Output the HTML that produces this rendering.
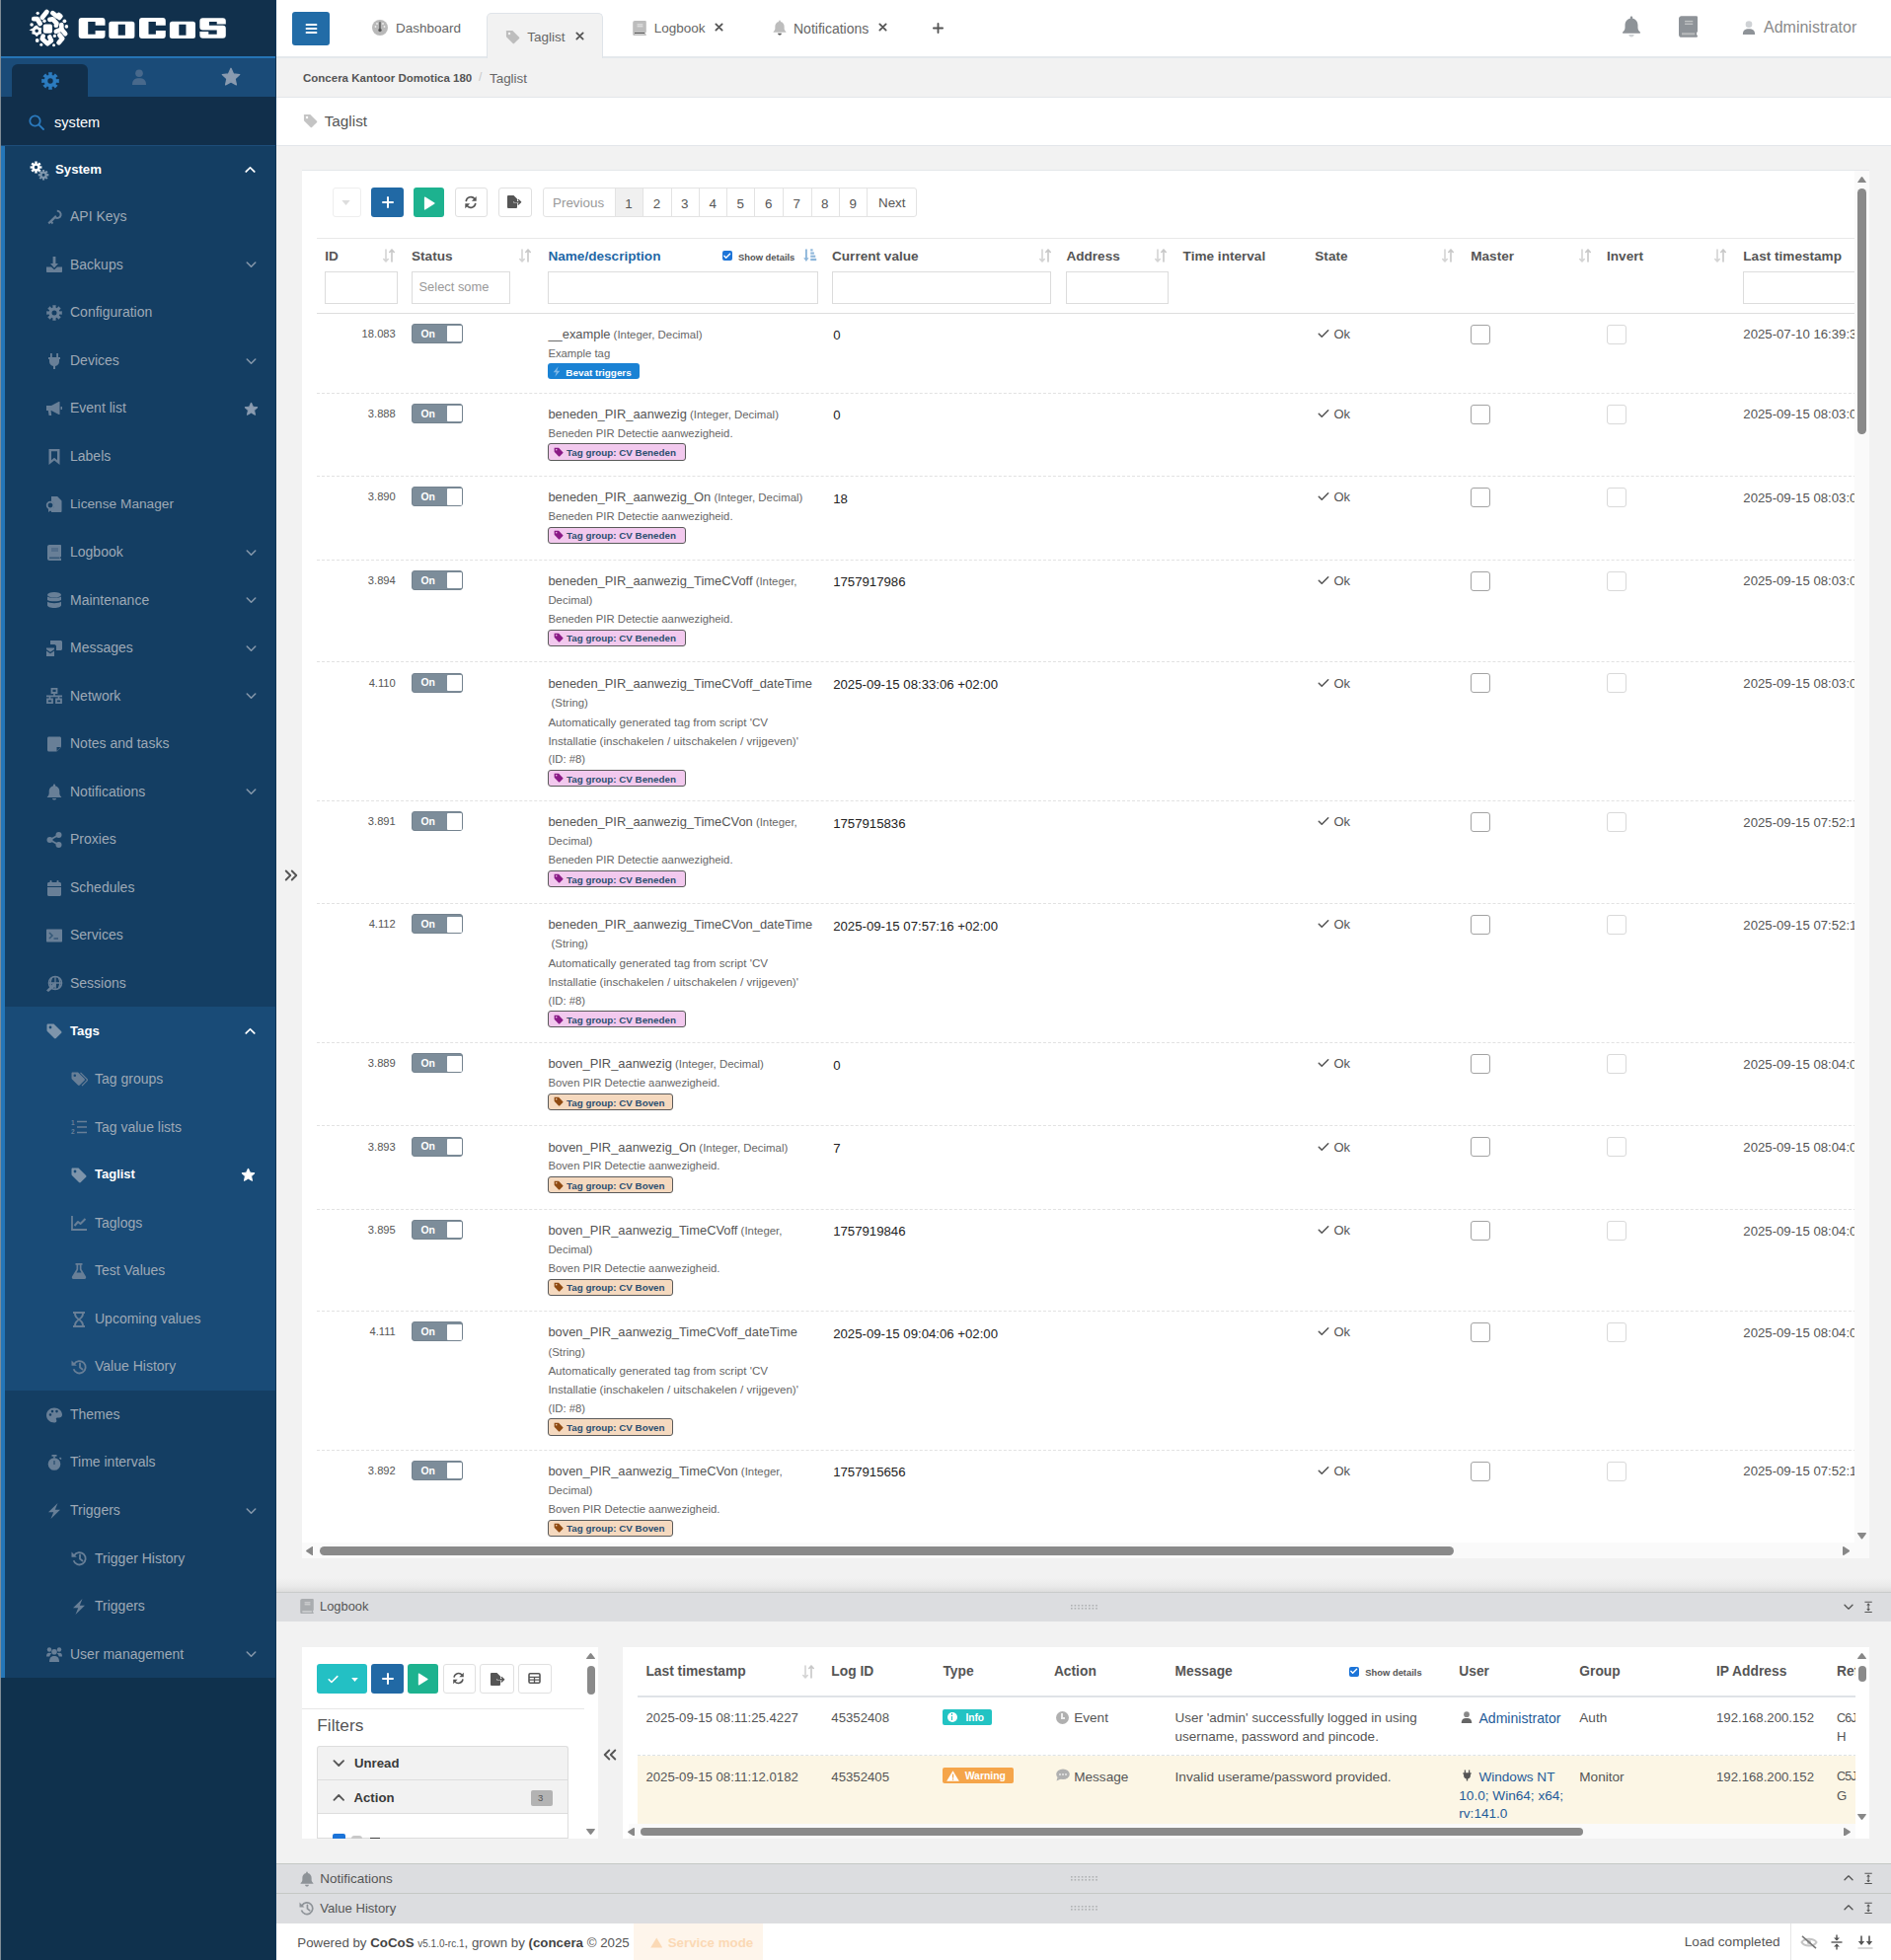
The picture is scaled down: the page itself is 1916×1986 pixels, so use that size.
<!DOCTYPE html><html><head><meta charset="utf-8"><style>
*{box-sizing:border-box;margin:0;padding:0}
html,body{width:1916px;height:1986px;overflow:hidden}
body{position:relative;background:#f2f2f2;font-family:"Liberation Sans",sans-serif;color:#555}
.a{position:absolute}
svg{display:block}
</style></head><body><div class="a" style="left:0px;top:0px;width:280px;height:1986px;background:#0f314d"></div>
<div class="a" style="left:0px;top:0px;width:280px;height:57px;background:#11304c"></div>
<svg class="a" style="left:26px;top:6px" width="46" height="44" viewBox="0 0 46 44"><rect x="17.8" y="18.5" width="9.2" height="9.2" rx="2" fill="#fff"/><circle cx="12.2" cy="7.3" r="1.6" fill="#fff"/><circle cx="19" cy="15.3" r="1.7" fill="#fff"/><circle cx="39.4" cy="15.3" r="1.9" fill="#fff"/><circle cx="6.1" cy="19" r="1.8" fill="#fff"/><circle cx="41.4" cy="20.9" r="1.8" fill="#fff"/><circle cx="29.4" cy="30.4" r="1.6" fill="#fff"/><circle cx="11.7" cy="35" r="1.9" fill="#fff"/><circle cx="15.8" cy="39.2" r="1.5" fill="#fff"/><circle cx="28.5" cy="39.7" r="1.5" fill="#fff"/><polyline points="16.8,11.7 21.4,6.1" fill="none" stroke="#fff" stroke-width="4.8" stroke-linecap="round" stroke-linejoin="round"/><polyline points="27.3,7.1 31.5,10.3" fill="none" stroke="#fff" stroke-width="4.6" stroke-linecap="round" stroke-linejoin="round"/><rect x="30.5" y="7.2" width="6.8" height="6.6" rx="2.2" fill="#fff" transform="rotate(40 33.9 10.5)"/><polyline points="8.3,13.2 11.8,13.2 14.6,18" fill="none" stroke="#fff" stroke-width="4.8" stroke-linecap="round" stroke-linejoin="round"/><polyline points="24.5,13.8 27.3,13.3 31.4,17.6 31,19.6" fill="none" stroke="#fff" stroke-width="4.8" stroke-linecap="round" stroke-linejoin="round"/><path fill="#fff" fill-rule="evenodd" d="M11.2,19.6 L13.5,21.7 L16.3,22.4 L15.7,25.5 L16.2,28.3 L13.3,29 L11.2,31.2 L9.1,29 L6.2,28.3 L6.8,25.5 L3.5,24.5 L7.3,22.4 L9,20.5Z M11.2,23.5 A1.8,1.8 0 1 0 11.2,27.1 A1.8,1.8 0 1 0 11.2,23.5Z"/><polyline points="36.3,19 36.3,23.6 30.8,25.8" fill="none" stroke="#fff" stroke-width="4.6" stroke-linecap="round" stroke-linejoin="round"/><polyline points="36.3,23.6 40.2,28.2" fill="none" stroke="#fff" stroke-width="4.6" stroke-linecap="round" stroke-linejoin="round"/><polyline points="17.7,30.6 16.7,33.4 22.2,38.3 26,35.2 24.3,31.5" fill="none" stroke="#fff" stroke-width="4.6" stroke-linecap="round" stroke-linejoin="round"/><polyline points="34.4,29.6 37.2,33 33.6,37.2" fill="none" stroke="#fff" stroke-width="4.8" stroke-linecap="round" stroke-linejoin="round"/></svg>
<svg class="a" style="left:0px;top:0px" width="240" height="57" viewBox="0 0 240 57"><path fill="#fff" fill-rule="evenodd" d="M82.7,18.06 L103.5,18.06 Q106.5,18.06 106.5,21 L106.5,25.8 L96.6,25.8 L96.6,30.9 L106.5,30.9 L106.5,36 Q106.5,39 103.5,39 L82.7,39 Q79.7,39 79.7,36 L79.7,21 Q79.7,18.06 82.7,18.06Z M89.2,22.1 L89.2,34.8 L96.6,34.8 L96.6,22.1Z"/><path fill="#fff" fill-rule="evenodd" d="M112.8,21.8 L133.9,21.8 Q136.4,21.8 136.4,24.3 L136.4,36.5 Q136.4,39 133.9,39 L112.8,39 Q110.3,39 110.3,36.5 L110.3,24.3 Q110.3,21.8 112.8,21.8Z M119.7,24.8 L119.7,35.7 L126.9,35.7 L126.9,24.8Z"/><path fill="#fff" fill-rule="evenodd" d="M144,18.06 L164.8,18.06 Q167.8,18.06 167.8,21 L167.8,25.8 L157.9,25.8 L157.9,30.9 L167.8,30.9 L167.8,36 Q167.8,39 164.8,39 L144,39 Q141,39 141,36 L141,21 Q141,18.06 144,18.06Z M150.5,22.1 L150.5,34.8 L157.9,34.8 L157.9,22.1Z"/><path fill="#fff" fill-rule="evenodd" d="M174.4,21.8 L195.5,21.8 Q198.0,21.8 198.0,24.3 L198.0,36.5 Q198.0,39 195.5,39 L174.4,39 Q171.9,39 171.9,36.5 L171.9,24.3 Q171.9,21.8 174.4,21.8Z M181.3,24.8 L181.3,35.7 L188.5,35.7 L188.5,24.8Z"/><path fill="#fff" d="M205.4,18.2 L225.8,18.2 Q228.8,18.2 228.8,21.2 L228.8,24.5 L219.70000000000002,24.5 L219.70000000000002,22 L211.9,22 L211.9,25.8 L225.8,25.8 Q228.8,25.8 228.8,28.8 L228.8,35.7 Q228.8,38.7 225.8,38.7 L205.4,38.7 Q202.4,38.7 202.4,35.7 L202.4,31.9 L211.3,31.9 L211.3,34.75 L219.70000000000002,34.75 L219.70000000000002,30.6 L205.4,30.6 Q202.4,30.6 202.4,27.6 L202.4,21.2 Q202.4,18.2 205.4,18.2Z"/></svg>
<div class="a" style="left:0px;top:57px;width:280px;height:2px;background:#2574b5"></div>
<div class="a" style="left:0px;top:59px;width:280px;height:39px;background:#1a4b78"></div>
<div class="a" style="left:12px;top:65px;width:77px;height:33px;background:#112f4b;border-radius:6px 6px 0 0"></div>
<svg class="a" style="left:42px;top:73px" width="18" height="18" viewBox="0 0 16 16"><path fill="#2b7bbf" fill-rule="evenodd" d="M15.81,6.29 L15.81,9.71 L13.41,9.46 L12.85,10.79 L14.74,12.31 L12.31,14.74 L10.79,12.85 L9.46,13.41 L9.71,15.81 L6.29,15.81 L6.54,13.41 L5.21,12.85 L3.69,14.74 L1.26,12.31 L3.15,10.79 L2.59,9.46 L0.19,9.71 L0.19,6.29 L2.59,6.54 L3.15,5.21 L1.26,3.69 L3.69,1.26 L5.21,3.15 L6.54,2.59 L6.29,0.19 L9.71,0.19 L9.46,2.59 L10.79,3.15 L12.31,1.26 L14.74,3.69 L12.85,5.21 L13.41,6.54ZM10.40,8.00 A2.4,2.4 0 1,0 5.60,8.00 A2.4,2.4 0 1,0 10.40,8.00Z"/></svg>
<svg class="a" style="left:133px;top:69px" width="16" height="18" viewBox="0 0 16 16"><circle cx="8" cy="4.2" r="3.8" fill="#48698c"/><path fill="#48698c" d="M1,16 C1,11 3.5,9.3 8,9.3 C12.5,9.3 15,11 15,16Z"/></svg>
<svg class="a" style="left:224px;top:68px" width="20" height="20" viewBox="0 0 24 24"><path fill="#8a9bb0" stroke="#8a9bb0" stroke-width="1.5" stroke-linejoin="round" d="M12,1.5 L15.1,8.3 L22.5,9.1 L17,14.1 L18.5,21.5 L12,17.8 L5.5,21.5 L7,14.1 L1.5,9.1 L8.9,8.3Z"/></svg>
<div class="a" style="left:0px;top:98px;width:280px;height:49px;background:#112f4b"></div>
<svg class="a" style="left:29px;top:116px" width="16" height="16" viewBox="0 0 16 16"><circle cx="6.5" cy="6.5" r="5.2" fill="none" stroke="#2b7bbf" stroke-width="1.8"/><path d="M10.3,10.3 L15,15" stroke="#2b7bbf" stroke-width="1.8" stroke-linecap="round"/></svg>
<div class="a" style="left:55px;top:116.20px;font-size:14.6px;line-height:16.79px;color:#fff;font-weight:normal;white-space:nowrap">system</div>
<div class="a" style="left:0px;top:147px;width:280px;height:1px;background:#1d4d7a"></div>
<div class="a" style="left:0px;top:148px;width:280px;height:1552px;background:#143e63"></div>
<div class="a" style="left:0px;top:1019.5px;width:280px;height:389.5px;background:#194b77"></div>
<div class="a" style="left:1px;top:148px;width:4px;height:1552px;background:#2576b8"></div>
<div class="a" style="left:279px;top:0px;width:1px;height:1986px;background:#0f3658"></div>
<div class="a" style="left:0px;top:0px;width:1px;height:1986px;background:#7f8c96"></div>
<svg class="a" style="left:30px;top:163px" width="20" height="20" viewBox="0 0 18.5 18.5" overflow="visible"><path fill="#fff" fill-rule="evenodd" d="M11.47,4.80 L11.47,7.20 L9.77,7.01 L9.38,7.95 L10.72,9.02 L9.02,10.72 L7.95,9.38 L7.01,9.77 L7.20,11.47 L4.80,11.47 L4.99,9.77 L4.05,9.38 L2.98,10.72 L1.28,9.02 L2.62,7.95 L2.23,7.01 L0.53,7.20 L0.53,4.80 L2.23,4.99 L2.62,4.05 L1.28,2.98 L2.98,1.28 L4.05,2.62 L4.99,2.23 L4.80,0.53 L7.20,0.53 L7.01,2.23 L7.95,2.62 L9.02,1.28 L10.72,2.98 L9.38,4.05 L9.77,4.99ZM7.60,6.00 A1.6,1.6 0 1,0 4.40,6.00 A1.6,1.6 0 1,0 7.60,6.00Z"/><path fill="#7f97ad" fill-rule="evenodd" d="M17.88,12.13 L17.88,14.27 L16.38,14.11 L16.03,14.95 L17.21,15.90 L15.70,17.41 L14.75,16.23 L13.91,16.58 L14.07,18.08 L11.93,18.08 L12.09,16.58 L11.25,16.23 L10.30,17.41 L8.79,15.90 L9.97,14.95 L9.62,14.11 L8.12,14.27 L8.12,12.13 L9.62,12.29 L9.97,11.45 L8.79,10.50 L10.30,8.99 L11.25,10.17 L12.09,9.82 L11.93,8.32 L14.07,8.32 L13.91,9.82 L14.75,10.17 L15.70,8.99 L17.21,10.50 L16.03,11.45 L16.38,12.29ZM14.40,13.20 A1.4,1.4 0 1,0 11.60,13.20 A1.4,1.4 0 1,0 14.40,13.20Z"/></svg>
<div class="a" style="left:56px;top:163.71px;font-size:13.2px;line-height:15.18px;color:#fff;font-weight:bold;white-space:nowrap">System</div>
<svg class="a" style="left:248px;top:168px" width="11" height="7" viewBox="0 0 12 8"><path d="M1.2,6.8 L6,2 L10.8,6.8" fill="none" stroke="#fff" stroke-width="2" stroke-linecap="round" stroke-linejoin="round"/></svg>
<svg class="a" style="left:47px;top:211.85000000000002px" width="16" height="16" viewBox="0 0 16 16" overflow="visible"><path fill="none" stroke="#687f97" stroke-width="2" d="M10.8,1.8 A3.6,3.6 0 1 1 9.2,8.5"/><path fill="#687f97" d="M9.2,6 L1.5,13.6 L3,15.2 L4.4,13.8 L5.8,15.2 L7.2,13.8 L6,12.5 L10.6,7.8Z"/></svg>
<div class="a" style="left:71px;top:211.10px;font-size:14px;line-height:16.1px;color:#9ea9b6;font-weight:normal;white-space:nowrap">API Keys</div>
<svg class="a" style="left:47px;top:260.4px" width="16" height="16" viewBox="0 0 16 16" overflow="visible"><path fill="#687f97" d="M6.6,0 L9.4,0 L9.4,7 L12,7 L8,11.5 L4,7 L6.6,7Z"/><path fill="#687f97" d="M0,10.5 L5,10.5 L8,13.3 L11,10.5 L16,10.5 L16,15 C16,15.6 15.6,16 15,16 L1,16 C0.4,16 0,15.6 0,15Z"/></svg>
<div class="a" style="left:71px;top:259.65px;font-size:14px;line-height:16.1px;color:#9ea9b6;font-weight:normal;white-space:nowrap">Backups</div>
<svg class="a" style="left:249px;top:265.4px" width="11" height="7" viewBox="0 0 12 8"><path d="M1.2,1.2 L6,6 L10.8,1.2" fill="none" stroke="#8597aa" stroke-width="1.8" stroke-linecap="round" stroke-linejoin="round"/></svg>
<svg class="a" style="left:47px;top:308.95px" width="16" height="16" viewBox="0 0 16 16" overflow="visible"><path fill="#687f97" fill-rule="evenodd" d="M15.81,6.29 L15.81,9.71 L13.41,9.46 L12.85,10.79 L14.74,12.31 L12.31,14.74 L10.79,12.85 L9.46,13.41 L9.71,15.81 L6.29,15.81 L6.54,13.41 L5.21,12.85 L3.69,14.74 L1.26,12.31 L3.15,10.79 L2.59,9.46 L0.19,9.71 L0.19,6.29 L2.59,6.54 L3.15,5.21 L1.26,3.69 L3.69,1.26 L5.21,3.15 L6.54,2.59 L6.29,0.19 L9.71,0.19 L9.46,2.59 L10.79,3.15 L12.31,1.26 L14.74,3.69 L12.85,5.21 L13.41,6.54ZM10.50,8.00 A2.5,2.5 0 1,0 5.50,8.00 A2.5,2.5 0 1,0 10.50,8.00Z"/></svg>
<div class="a" style="left:71px;top:308.20px;font-size:14px;line-height:16.1px;color:#9ea9b6;font-weight:normal;white-space:nowrap">Configuration</div>
<svg class="a" style="left:47px;top:357.5px" width="16" height="16" viewBox="0 0 16 16" overflow="visible"><path fill="#687f97" d="M4,0 L5.8,0 L5.8,4 L10.2,4 L10.2,0 L12,0 L12,4 L14,4 L14,6 L13,6 L13,8.5 C13,11 11,12.8 9,13 L9,16 L7,16 L7,13 C5,12.8 3,11 3,8.5 L3,6 L2,6 L2,4 L4,4Z"/></svg>
<div class="a" style="left:71px;top:356.75px;font-size:14px;line-height:16.1px;color:#9ea9b6;font-weight:normal;white-space:nowrap">Devices</div>
<svg class="a" style="left:249px;top:362.5px" width="11" height="7" viewBox="0 0 12 8"><path d="M1.2,1.2 L6,6 L10.8,1.2" fill="none" stroke="#8597aa" stroke-width="1.8" stroke-linecap="round" stroke-linejoin="round"/></svg>
<svg class="a" style="left:47px;top:406.05px" width="16" height="16" viewBox="0 0 16 16" overflow="visible"><path fill="#687f97" d="M0,5 L5,5 L12.5,1 L13.5,1 L13.5,14 L12.5,14 L5,10 L4.6,10 L5.2,15 L2.6,15 L1.8,10 L0,10Z"/><rect x="14.5" y="6" width="1.5" height="3" fill="#687f97"/></svg>
<div class="a" style="left:71px;top:405.30px;font-size:14px;line-height:16.1px;color:#9ea9b6;font-weight:normal;white-space:nowrap">Event list</div>
<svg class="a" style="left:247px;top:406.55px" width="15" height="15" viewBox="0 0 24 24"><path fill="#8a9bb0" stroke="#8a9bb0" stroke-width="1.5" stroke-linejoin="round" d="M12,1.5 L15.1,8.3 L22.5,9.1 L17,14.1 L18.5,21.5 L12,17.8 L5.5,21.5 L7,14.1 L1.5,9.1 L8.9,8.3Z"/></svg>
<svg class="a" style="left:47px;top:454.59999999999997px" width="16" height="16" viewBox="0 0 16 16" overflow="visible"><path fill="#687f97" d="M2.5,0 L13.5,0 L13.5,16 L8,11.5 L2.5,16Z M5,2.3 L5,11.2 L8,8.8 L11,11.2 L11,2.3Z" fill-rule="evenodd"/></svg>
<div class="a" style="left:71px;top:453.85px;font-size:14px;line-height:16.1px;color:#9ea9b6;font-weight:normal;white-space:nowrap">Labels</div>
<svg class="a" style="left:47px;top:503.15px" width="16" height="16" viewBox="0 0 16 16" overflow="visible"><path fill="#687f97" d="M5,0 L11,0 L15.5,4.5 L15.5,15 C15.5,15.6 15.1,16 14.5,16 L5,16 L5,12.5 C7,12 8,10.5 8,9 C8,7 6.5,5.5 5,5.3Z"/><path fill="#687f97" d="M11,0 L11,4.5 L15.5,4.5Z" opacity="0.5"/><circle cx="4" cy="9" r="3.3" fill="none" stroke="#687f97" stroke-width="1.8"/><path fill="#687f97" d="M2,12 L2,16 L4,14.6 L6,16 L6,12Z"/></svg>
<div class="a" style="left:71px;top:502.57px;font-size:13.7px;line-height:15.75px;color:#9ea9b6;font-weight:normal;white-space:nowrap">License Manager</div>
<svg class="a" style="left:47px;top:551.7px" width="16" height="16" viewBox="0 0 16 16" overflow="visible"><path fill="#687f97" d="M1,2 C1,0.9 1.9,0 3,0 L14,0 C14.6,0 15,0.4 15,1 L15,12 L14.3,12 L14.3,14 L15,14 L15,16 L3,16 C1.9,16 1,15.1 1,14Z"/><rect x="3" y="12.5" width="10.5" height="1.6" fill="#143e63" opacity="0.6"/><rect x="5" y="3.5" width="7" height="1" fill="#143e63" opacity="0.5"/><rect x="5" y="5.5" width="7" height="1" fill="#143e63" opacity="0.5"/></svg>
<div class="a" style="left:71px;top:550.95px;font-size:14px;line-height:16.1px;color:#9ea9b6;font-weight:normal;white-space:nowrap">Logbook</div>
<svg class="a" style="left:249px;top:556.7px" width="11" height="7" viewBox="0 0 12 8"><path d="M1.2,1.2 L6,6 L10.8,1.2" fill="none" stroke="#8597aa" stroke-width="1.8" stroke-linecap="round" stroke-linejoin="round"/></svg>
<svg class="a" style="left:47px;top:600.25px" width="16" height="16" viewBox="0 0 16 16" overflow="visible"><ellipse cx="8" cy="2.8" rx="7" ry="2.8" fill="#687f97"/><path fill="#687f97" d="M1,4.6 C2.5,6.2 13.5,6.2 15,4.6 L15,8 C13.5,9.8 2.5,9.8 1,8Z"/><path fill="#687f97" d="M1,9.8 C2.5,11.6 13.5,11.6 15,9.8 L15,13.2 C15,14.8 12,16 8,16 C4,16 1,14.8 1,13.2Z"/></svg>
<div class="a" style="left:71px;top:599.50px;font-size:14px;line-height:16.1px;color:#9ea9b6;font-weight:normal;white-space:nowrap">Maintenance</div>
<svg class="a" style="left:249px;top:605.25px" width="11" height="7" viewBox="0 0 12 8"><path d="M1.2,1.2 L6,6 L10.8,1.2" fill="none" stroke="#8597aa" stroke-width="1.8" stroke-linecap="round" stroke-linejoin="round"/></svg>
<svg class="a" style="left:47px;top:648.8px" width="16" height="16" viewBox="0 0 16 16" overflow="visible"><path fill="#687f97" d="M4,0 L14.5,0 C15.3,0 16,0.7 16,1.5 L16,8.5 C16,9.3 15.3,10 14.5,10 L10,10 L10,6 C10,5 9.3,4 8,4 L4,4Z"/><path fill="#687f97" d="M0,7.5 L8,7.5 L8,9 L4,11.7 L0,9Z M0,10.6 L4,13.3 L8,10.6 L8,16 L0,16Z"/></svg>
<div class="a" style="left:71px;top:648.05px;font-size:14px;line-height:16.1px;color:#9ea9b6;font-weight:normal;white-space:nowrap">Messages</div>
<svg class="a" style="left:249px;top:653.8px" width="11" height="7" viewBox="0 0 12 8"><path d="M1.2,1.2 L6,6 L10.8,1.2" fill="none" stroke="#8597aa" stroke-width="1.8" stroke-linecap="round" stroke-linejoin="round"/></svg>
<svg class="a" style="left:47px;top:697.3499999999999px" width="16" height="16" viewBox="0 0 16 16" overflow="visible"><path fill="none" stroke="#687f97" stroke-width="1.8" d="M5.5,0.9 L10.5,0.9 L10.5,5 L5.5,5Z M1,11.5 L6,11.5 L6,15.1 L1,15.1Z M10,11.5 L15,11.5 L15,15.1 L10,15.1Z"/><path stroke="#687f97" stroke-width="1.6" d="M8,5 L8,8 M0,8.4 L16,8.4 M3.5,8.4 L3.5,11.5 M12.5,8.4 L12.5,11.5"/></svg>
<div class="a" style="left:71px;top:696.60px;font-size:14px;line-height:16.1px;color:#9ea9b6;font-weight:normal;white-space:nowrap">Network</div>
<svg class="a" style="left:249px;top:702.3499999999999px" width="11" height="7" viewBox="0 0 12 8"><path d="M1.2,1.2 L6,6 L10.8,1.2" fill="none" stroke="#8597aa" stroke-width="1.8" stroke-linecap="round" stroke-linejoin="round"/></svg>
<svg class="a" style="left:47px;top:745.8999999999999px" width="16" height="16" viewBox="0 0 16 16" overflow="visible"><path fill="#687f97" d="M1,2 C1,1.2 1.7,0.5 2.5,0.5 L13.5,0.5 C14.3,0.5 15,1.2 15,2 L15,10.5 L10,15.5 L2.5,15.5 C1.7,15.5 1,14.8 1,14Z M15,11 L10.5,11 L10.5,15.5Z" fill-rule="evenodd"/></svg>
<div class="a" style="left:71px;top:745.15px;font-size:14px;line-height:16.1px;color:#9ea9b6;font-weight:normal;white-space:nowrap">Notes and tasks</div>
<svg class="a" style="left:47px;top:794.45px" width="16" height="16" viewBox="0 0 16 16" overflow="visible"><path fill="#687f97" d="M8,0.5 C8.6,0.5 9,0.9 9,1.5 L9,2.2 C11.6,2.7 13.3,5 13.3,7.6 L13.3,9.8 C13.3,11.3 14,12.6 15.2,13.5 L15.2,14 L0.8,14 L0.8,13.5 C2,12.6 2.7,11.3 2.7,9.8 L2.7,7.6 C2.7,5 4.4,2.7 7,2.2 L7,1.5 C7,0.9 7.4,0.5 8,0.5Z"/><path fill="#687f97" d="M6,15 L10,15 C10,16 9,16.5 8,16.5 C7,16.5 6,16 6,15Z"/></svg>
<div class="a" style="left:71px;top:793.70px;font-size:14px;line-height:16.1px;color:#9ea9b6;font-weight:normal;white-space:nowrap">Notifications</div>
<svg class="a" style="left:249px;top:799.45px" width="11" height="7" viewBox="0 0 12 8"><path d="M1.2,1.2 L6,6 L10.8,1.2" fill="none" stroke="#8597aa" stroke-width="1.8" stroke-linecap="round" stroke-linejoin="round"/></svg>
<svg class="a" style="left:47px;top:843.0px" width="16" height="16" viewBox="0 0 16 16" overflow="visible"><circle cx="12.5" cy="3" r="3" fill="#687f97"/><circle cx="3.5" cy="8" r="3" fill="#687f97"/><circle cx="12.5" cy="13" r="3" fill="#687f97"/><path d="M3.5,8 L12.5,3 M3.5,8 L12.5,13" stroke="#687f97" stroke-width="1.8"/></svg>
<div class="a" style="left:71px;top:842.25px;font-size:14px;line-height:16.1px;color:#9ea9b6;font-weight:normal;white-space:nowrap">Proxies</div>
<svg class="a" style="left:47px;top:891.55px" width="16" height="16" viewBox="0 0 16 16" overflow="visible"><path fill="#687f97" d="M1,3.5 C1,2.7 1.7,2 2.5,2 L13.5,2 C14.3,2 15,2.7 15,3.5 L15,6 L1,6Z M1,7 L15,7 L15,14.5 C15,15.3 14.3,16 13.5,16 L2.5,16 C1.7,16 1,15.3 1,14.5Z"/><rect x="3.5" y="0" width="2" height="3.5" rx="1" fill="#687f97"/><rect x="10.5" y="0" width="2" height="3.5" rx="1" fill="#687f97"/></svg>
<div class="a" style="left:71px;top:890.80px;font-size:14px;line-height:16.1px;color:#9ea9b6;font-weight:normal;white-space:nowrap">Schedules</div>
<svg class="a" style="left:47px;top:940.0999999999999px" width="16" height="16" viewBox="0 0 16 16" overflow="visible"><path fill="#687f97" d="M1,1.5 L15,1.5 C15.6,1.5 16,1.9 16,2.5 L16,13.5 C16,14.1 15.6,14.5 15,14.5 L1,14.5 C0.4,14.5 0,14.1 0,13.5 L0,2.5 C0,1.9 0.4,1.5 1,1.5Z"/><path d="M3,5 L6,8 L3,11 M7.5,11 L12,11" stroke="#143e63" stroke-width="1.5" fill="none" opacity="0.6"/></svg>
<div class="a" style="left:71px;top:939.35px;font-size:14px;line-height:16.1px;color:#9ea9b6;font-weight:normal;white-space:nowrap">Services</div>
<svg class="a" style="left:47px;top:988.6499999999999px" width="16" height="16" viewBox="0 0 16 16" overflow="visible"><circle cx="9" cy="7" r="6.5" fill="none" stroke="#687f97" stroke-width="1.6"/><path d="M2.5,7 L15.5,7 M9,0.5 L9,13.5 M5.5,2 C4,5 4,9 5.5,12 M12.5,2 C14,5 14,9 12.5,12" stroke="#687f97" stroke-width="1.3" fill="none"/><path fill="#687f97" d="M0,14.5 L6,8.5 L4.5,7.5 L10,7 L9.5,12.5 L8.3,11 L2,16Z"/></svg>
<div class="a" style="left:71px;top:987.90px;font-size:14px;line-height:16.1px;color:#9ea9b6;font-weight:normal;white-space:nowrap">Sessions</div>
<svg class="a" style="left:47px;top:1037.2px" width="16" height="16" viewBox="0 0 16 16" overflow="visible"><path fill="#7e95ab" d="M0.5,1.5 C0.5,1 1,0.5 1.5,0.5 L7,0.5 C7.4,0.5 7.8,0.7 8,0.9 L15.1,8 C15.6,8.5 15.6,9.3 15.1,9.8 L9.8,15.1 C9.3,15.6 8.5,15.6 8,15.1 L0.9,8 C0.7,7.8 0.5,7.4 0.5,7Z M4,2.6 A1.4,1.4 0 1 0 4,5.4 A1.4,1.4 0 1 0 4,2.6Z" fill-rule="evenodd"/></svg>
<div class="a" style="left:71px;top:1036.91px;font-size:13.2px;line-height:15.18px;color:#fff;font-weight:bold;white-space:nowrap">Tags</div>
<svg class="a" style="left:248px;top:1041.2px" width="11" height="7" viewBox="0 0 12 8"><path d="M1.2,6.8 L6,2 L10.8,6.8" fill="none" stroke="#fff" stroke-width="2" stroke-linecap="round" stroke-linejoin="round"/></svg>
<svg class="a" style="left:72px;top:1085.75px" width="16" height="16" viewBox="0 0 16 16" overflow="visible"><path fill="#687f97" d="M0.5,1.5 C0.5,1 1,0.5 1.5,0.5 L6.5,0.5 C6.9,0.5 7.3,0.7 7.5,0.9 L13.6,7 C14.1,7.5 14.1,8.3 13.6,8.8 L8.8,13.6 C8.3,14.1 7.5,14.1 7,13.6 L0.9,7.5 C0.7,7.3 0.5,6.9 0.5,6.5Z M3.8,2.4 A1.3,1.3 0 1 0 3.8,5 A1.3,1.3 0 1 0 3.8,2.4Z" fill-rule="evenodd"/><path d="M9.5,0.8 L16,7.3 C16.5,7.8 16.5,8.6 16,9.1 L11,14.1" fill="none" stroke="#687f97" stroke-width="1.2"/></svg>
<div class="a" style="left:96px;top:1085.00px;font-size:14px;line-height:16.1px;color:#9ea9b6;font-weight:normal;white-space:nowrap">Tag groups</div>
<svg class="a" style="left:72px;top:1134.3px" width="16" height="16" viewBox="0 0 16 16" overflow="visible"><path d="M6,2.5 L16,2.5 M6,8 L16,8 M6,13.5 L16,13.5" stroke="#687f97" stroke-width="1.7"/><text x="0" y="6" font-size="6.5" font-weight="bold" fill="#687f97" font-family="Liberation Sans">1</text><text x="0" y="14.5" font-size="6.5" font-weight="bold" fill="#687f97" font-family="Liberation Sans">2</text></svg>
<div class="a" style="left:96px;top:1133.55px;font-size:14px;line-height:16.1px;color:#9ea9b6;font-weight:normal;white-space:nowrap">Tag value lists</div>
<svg class="a" style="left:72px;top:1182.85px" width="16" height="16" viewBox="0 0 16 16" overflow="visible"><path fill="#7e95ab" d="M0.5,1.5 C0.5,1 1,0.5 1.5,0.5 L7,0.5 C7.4,0.5 7.8,0.7 8,0.9 L15.1,8 C15.6,8.5 15.6,9.3 15.1,9.8 L9.8,15.1 C9.3,15.6 8.5,15.6 8,15.1 L0.9,8 C0.7,7.8 0.5,7.4 0.5,7Z M4,2.6 A1.4,1.4 0 1 0 4,5.4 A1.4,1.4 0 1 0 4,2.6Z" fill-rule="evenodd"/></svg>
<div class="a" style="left:96px;top:1182.67px;font-size:13px;line-height:14.95px;color:#fff;font-weight:bold;white-space:nowrap">Taglist</div>
<svg class="a" style="left:244px;top:1183.35px" width="15" height="15" viewBox="0 0 24 24"><path fill="#fff" stroke="#fff" stroke-width="1.5" stroke-linejoin="round" d="M12,1.5 L15.1,8.3 L22.5,9.1 L17,14.1 L18.5,21.5 L12,17.8 L5.5,21.5 L7,14.1 L1.5,9.1 L8.9,8.3Z"/></svg>
<svg class="a" style="left:72px;top:1231.3999999999999px" width="16" height="16" viewBox="0 0 16 16" overflow="visible"><path d="M1,1 L1,15 L16,15" fill="none" stroke="#687f97" stroke-width="1.8"/><path d="M3.5,11 L7,7 L9.5,9 L14.5,4" fill="none" stroke="#687f97" stroke-width="2" stroke-linejoin="round"/></svg>
<div class="a" style="left:96px;top:1230.65px;font-size:14px;line-height:16.1px;color:#9ea9b6;font-weight:normal;white-space:nowrap">Taglogs</div>
<svg class="a" style="left:72px;top:1279.9499999999998px" width="16" height="16" viewBox="0 0 16 16" overflow="visible"><path fill="#687f97" d="M4.5,0 L11.5,0 L11.5,1.8 L10.5,1.8 L10.5,6 L15,13.5 C15.6,14.6 14.9,16 13.6,16 L2.4,16 C1.1,16 0.4,14.6 1,13.5 L5.5,6 L5.5,1.8 L4.5,1.8Z M7.2,1.8 L7.2,6.5 L5.5,9.5 L10.5,9.5 L8.8,6.5 L8.8,1.8Z" fill-rule="evenodd"/></svg>
<div class="a" style="left:96px;top:1279.20px;font-size:14px;line-height:16.1px;color:#9ea9b6;font-weight:normal;white-space:nowrap">Test Values</div>
<svg class="a" style="left:72px;top:1328.4999999999998px" width="16" height="16" viewBox="0 0 16 16" overflow="visible"><path fill="#687f97" d="M2,0 L14,0 L14,2 L13,2 C13,5 11,7 9.3,8 C11,9 13,11 13,14 L14,14 L14,16 L2,16 L2,14 L3,14 C3,11 5,9 6.7,8 C5,7 3,5 3,2 L2,2Z M5,2 C5,4 6.5,6 8,7 C9.5,6 11,4 11,2Z M5,14 L11,14 C11,12 9.5,10 8,9 C6.5,10 5,12 5,14Z" fill-rule="evenodd"/></svg>
<div class="a" style="left:96px;top:1327.75px;font-size:14px;line-height:16.1px;color:#9ea9b6;font-weight:normal;white-space:nowrap">Upcoming values</div>
<svg class="a" style="left:72px;top:1377.05px" width="16" height="16" viewBox="0 0 16 16" overflow="visible"><path d="M3.2,5 A6.2,6.2 0 1 1 2.6,10.2" fill="none" stroke="#687f97" stroke-width="1.8"/><path fill="#687f97" d="M0.5,1.5 L0.5,6.8 L5.8,6.8Z"/><path d="M9,4.5 L9,8.5 L11.5,10.5" fill="none" stroke="#687f97" stroke-width="1.8" stroke-linecap="round"/></svg>
<div class="a" style="left:96px;top:1376.30px;font-size:14px;line-height:16.1px;color:#9ea9b6;font-weight:normal;white-space:nowrap">Value History</div>
<svg class="a" style="left:47px;top:1425.6px" width="16" height="16" viewBox="0 0 16 16" overflow="visible"><path fill="#687f97" fill-rule="evenodd" d="M8,0.5 C12.4,0.5 16,3.6 16,7.5 C16,9.5 14.5,10.5 12.8,10.5 L11,10.5 C10,10.5 9.5,11.5 10,12.3 C10.5,13 10.5,13.7 10.2,14.4 C9.8,15.2 9,15.5 8,15.5 C3.6,15.5 0,12.1 0,8 C0,3.9 3.6,0.5 8,0.5Z M4,6.2 A1.3,1.3 0 1 0 4,8.8 A1.3,1.3 0 1 0 4,6.2Z M6,2.8 A1.3,1.3 0 1 0 6,5.4 A1.3,1.3 0 1 0 6,2.8Z M10.5,2.8 A1.3,1.3 0 1 0 10.5,5.4 A1.3,1.3 0 1 0 10.5,2.8Z"/></svg>
<div class="a" style="left:71px;top:1424.85px;font-size:14px;line-height:16.1px;color:#9ea9b6;font-weight:normal;white-space:nowrap">Themes</div>
<svg class="a" style="left:47px;top:1474.1499999999999px" width="16" height="16" viewBox="0 0 16 16" overflow="visible"><circle cx="8" cy="9.5" r="6.3" fill="#687f97"/><rect x="5.5" y="0" width="5" height="1.8" fill="#687f97"/><rect x="7.2" y="1.5" width="1.6" height="2" fill="#687f97"/><path d="M8,6 L8,10" stroke="#143e63" stroke-width="1.6" opacity="0.6"/><path d="M13.5,3 L15,4.5" stroke="#687f97" stroke-width="1.6"/></svg>
<div class="a" style="left:71px;top:1473.40px;font-size:14px;line-height:16.1px;color:#9ea9b6;font-weight:normal;white-space:nowrap">Time intervals</div>
<svg class="a" style="left:47px;top:1522.6999999999998px" width="16" height="16" viewBox="0 0 16 16" overflow="visible"><path fill="#687f97" d="M11.5,0 L2,9.3 L7.2,9.3 L4.5,16 L14,6.7 L8.8,6.7Z"/></svg>
<div class="a" style="left:71px;top:1521.95px;font-size:14px;line-height:16.1px;color:#9ea9b6;font-weight:normal;white-space:nowrap">Triggers</div>
<svg class="a" style="left:249px;top:1527.6999999999998px" width="11" height="7" viewBox="0 0 12 8"><path d="M1.2,1.2 L6,6 L10.8,1.2" fill="none" stroke="#8597aa" stroke-width="1.8" stroke-linecap="round" stroke-linejoin="round"/></svg>
<svg class="a" style="left:72px;top:1571.2499999999998px" width="16" height="16" viewBox="0 0 16 16" overflow="visible"><path d="M3.2,5 A6.2,6.2 0 1 1 2.6,10.2" fill="none" stroke="#687f97" stroke-width="1.8"/><path fill="#687f97" d="M0.5,1.5 L0.5,6.8 L5.8,6.8Z"/><path d="M9,4.5 L9,8.5 L11.5,10.5" fill="none" stroke="#687f97" stroke-width="1.8" stroke-linecap="round"/></svg>
<div class="a" style="left:96px;top:1570.50px;font-size:14px;line-height:16.1px;color:#9ea9b6;font-weight:normal;white-space:nowrap">Trigger History</div>
<svg class="a" style="left:72px;top:1619.8px" width="16" height="16" viewBox="0 0 16 16" overflow="visible"><path fill="#687f97" d="M11.5,0 L2,9.3 L7.2,9.3 L4.5,16 L14,6.7 L8.8,6.7Z"/></svg>
<div class="a" style="left:96px;top:1619.05px;font-size:14px;line-height:16.1px;color:#9ea9b6;font-weight:normal;white-space:nowrap">Triggers</div>
<svg class="a" style="left:47px;top:1668.35px" width="16" height="16" viewBox="0 0 16 16" overflow="visible"><circle cx="8" cy="5.8" r="2.8" fill="#687f97"/><path fill="#687f97" d="M3,16 C3,11.5 5,10 8,10 C11,10 13,11.5 13,16Z"/><circle cx="3" cy="3.5" r="2.2" fill="#687f97"/><circle cx="13" cy="3.5" r="2.2" fill="#687f97"/><path fill="#687f97" d="M0,10.5 C0,7.8 1,6.8 3,6.8 C4,6.8 4.7,7.1 5.2,7.6 C4.2,8.4 3.5,9.3 3.2,10.5Z M16,10.5 C16,7.8 15,6.8 13,6.8 C12,6.8 11.3,7.1 10.8,7.6 C11.8,8.4 12.5,9.3 12.8,10.5Z"/></svg>
<div class="a" style="left:71px;top:1667.60px;font-size:14px;line-height:16.1px;color:#9ea9b6;font-weight:normal;white-space:nowrap">User management</div>
<svg class="a" style="left:249px;top:1673.35px" width="11" height="7" viewBox="0 0 12 8"><path d="M1.2,1.2 L6,6 L10.8,1.2" fill="none" stroke="#8597aa" stroke-width="1.8" stroke-linecap="round" stroke-linejoin="round"/></svg>
<div class="a" style="left:280px;top:0px;width:1636px;height:57px;background:#fff"></div>
<div class="a" style="left:280px;top:57px;width:1636px;height:2px;background:#e4e8ec"></div>
<div class="a" style="left:296px;top:12px;width:38px;height:34px;background:#226ca7;border-radius:3px"></div>
<svg class="a" style="left:309px;top:24px" width="13" height="10" viewBox="0 0 14 12"><rect x="0" y="0" width="14" height="2.4" rx="1" fill="#fff"/><rect x="0" y="4.8" width="14" height="2.4" rx="1" fill="#fff"/><rect x="0" y="9.6" width="14" height="2.4" rx="1" fill="#fff"/></svg>
<svg class="a" style="left:377px;top:20px" width="16" height="16" viewBox="0 0 16 16"><circle cx="8" cy="8" r="8" fill="#b9b9b9"/><path d="M8,2.2 L8,10" stroke="#555" stroke-width="1.4"/><circle cx="8" cy="10.5" r="1.7" fill="#555"/><circle cx="3.5" cy="7" r="0.9" fill="#eee"/><circle cx="12.5" cy="7" r="0.9" fill="#eee"/><circle cx="5" cy="4" r="0.9" fill="#eee"/><circle cx="11" cy="4" r="0.9" fill="#eee"/></svg>
<div class="a" style="left:401px;top:21.24px;font-size:13.5px;line-height:15.52px;color:#666;font-weight:normal;white-space:nowrap">Dashboard</div>
<div class="a" style="left:493px;top:13px;width:118px;height:46px;background:#f2f2f2;border:1px solid #dfe4e9;border-bottom:none;border-radius:5px 5px 0 0"></div>
<svg class="a" style="left:511.5px;top:29.5px" width="15" height="15" viewBox="0 0 16 16"><path fill="#bdbdbd" d="M1,1.5 C1,1.2 1.2,1 1.5,1 L7.3,1 C7.6,1 7.9,1.1 8.1,1.3 L15,8.2 C15.4,8.6 15.4,9.2 15,9.6 L9.6,15 C9.2,15.4 8.6,15.4 8.2,15 L1.3,8.1 C1.1,7.9 1,7.6 1,7.3Z"/><circle cx="4.3" cy="4.3" r="1.3" fill="#f2f2f2"/></svg>
<div class="a" style="left:534.3px;top:30.24px;font-size:13.5px;line-height:15.52px;color:#666;font-weight:normal;white-space:nowrap">Taglist</div>
<svg class="a" style="left:583px;top:32px" width="9" height="9" viewBox="0 0 10 10"><path d="M1.5,1.5 L8.5,8.5 M8.5,1.5 L1.5,8.5" stroke="#555" stroke-width="2" stroke-linecap="round"/></svg>
<svg class="a" style="left:641px;top:20.5px" width="14" height="15.5" viewBox="0 0 14 16"><path fill="#bdbdbd" d="M0,2 C0,0.9 0.9,0 2,0 L13,0 C13.6,0 14,0.4 14,1 L14,11.5 C14,12 13.7,12.3 13.3,12.4 L13.3,14 C13.7,14.1 14,14.5 14,15 C14,15.6 13.6,16 13,16 L2,16 C0.9,16 0,15.1 0,14Z"/><path fill="#fff" opacity="0.55" d="M2.2,12.6 L12,12.6 L12,14.2 L2.2,14.2Z"/><rect x="4.5" y="3.5" width="6" height="1" fill="#fff" opacity="0.7"/><rect x="4.5" y="5.5" width="6" height="1" fill="#fff" opacity="0.7"/></svg>
<div class="a" style="left:643.3px;top:32.7px;width:9.8px;height:1.6px;background:#555"></div>
<div class="a" style="left:662.7px;top:21.24px;font-size:13.5px;line-height:15.52px;color:#666;font-weight:normal;white-space:nowrap">Logbook</div>
<svg class="a" style="left:724px;top:23px" width="9" height="9" viewBox="0 0 10 10"><path d="M1.5,1.5 L8.5,8.5 M8.5,1.5 L1.5,8.5" stroke="#555" stroke-width="2" stroke-linecap="round"/></svg>
<svg class="a" style="left:782.5px;top:19.5px" width="14" height="16" viewBox="0 0 16 18"><path fill="#bdbdbd" d="M8,0.5 C8.6,0.5 9,0.9 9,1.5 L9,2.2 C11.6,2.7 13.3,5 13.3,7.6 L13.3,9.8 C13.3,11.3 14,12.6 15.2,13.5 C15.6,13.8 15.4,14.5 14.9,14.5 L1.1,14.5 C0.6,14.5 0.4,13.8 0.8,13.5 C2,12.6 2.7,11.3 2.7,9.8 L2.7,7.6 C2.7,5 4.4,2.7 7,2.2 L7,1.5 C7,0.9 7.4,0.5 8,0.5Z"/><path fill="#555" d="M5.8,15.5 L10.2,15.5 C10.2,16.7 9.2,17.6 8,17.6 C6.8,17.6 5.8,16.7 5.8,15.5Z"/></svg>
<div class="a" style="left:804px;top:20.95px;font-size:14px;line-height:16.1px;color:#666;font-weight:normal;white-space:nowrap">Notifications</div>
<svg class="a" style="left:890px;top:23px" width="9" height="9" viewBox="0 0 10 10"><path d="M1.5,1.5 L8.5,8.5 M8.5,1.5 L1.5,8.5" stroke="#555" stroke-width="2" stroke-linecap="round"/></svg>
<svg class="a" style="left:945px;top:23px" width="11" height="11" viewBox="0 0 12 12"><path d="M6,1 L6,11 M1,6 L11,6" stroke="#555" stroke-width="2" stroke-linecap="round"/></svg>
<svg class="a" style="left:1643px;top:16px" width="20" height="22" viewBox="0 0 16 18"><path fill="#8e9398" d="M8,0.5 C8.6,0.5 9,0.9 9,1.5 L9,2.2 C11.6,2.7 13.3,5 13.3,7.6 L13.3,9.8 C13.3,11.3 14,12.6 15.2,13.5 C15.6,13.8 15.4,14.5 14.9,14.5 L1.1,14.5 C0.6,14.5 0.4,13.8 0.8,13.5 C2,12.6 2.7,11.3 2.7,9.8 L2.7,7.6 C2.7,5 4.4,2.7 7,2.2 L7,1.5 C7,0.9 7.4,0.5 8,0.5Z"/><path fill="#d0d3d6" d="M5.8,15.5 L10.2,15.5 C10.2,16.7 9.2,17.6 8,17.6 C6.8,17.6 5.8,16.7 5.8,15.5Z"/></svg>
<svg class="a" style="left:1701px;top:16px" width="19" height="22" viewBox="0 0 14 16"><path fill="#8e9398" d="M0,2 C0,0.9 0.9,0 2,0 L13,0 C13.6,0 14,0.4 14,1 L14,11.5 C14,12 13.7,12.3 13.3,12.4 L13.3,14 C13.7,14.1 14,14.5 14,15 C14,15.6 13.6,16 13,16 L2,16 C0.9,16 0,15.1 0,14Z"/><path fill="#d8d8d8" opacity="0.55" d="M2.2,12.6 L12,12.6 L12,14.2 L2.2,14.2Z"/><rect x="4.5" y="3.5" width="6" height="1" fill="#d8d8d8" opacity="0.7"/><rect x="4.5" y="5.5" width="6" height="1" fill="#d8d8d8" opacity="0.7"/></svg>
<svg class="a" style="left:1765px;top:20px" width="14" height="16" viewBox="0 0 16 16"><circle cx="8" cy="4.2" r="3.8" fill="#cfd2d5"/><path fill="#8e9398" d="M1,16 C1,11 3.5,9.3 8,9.3 C12.5,9.3 15,11 15,16Z"/></svg>
<div class="a" style="left:1787px;top:18.80px;font-size:16px;line-height:18.4px;color:#8a8a8a;font-weight:normal;white-space:nowrap">Administrator</div>
<div class="a" style="left:280px;top:59px;width:1636px;height:39px;background:#f2f2f2"></div>
<div class="a" style="left:280px;top:98px;width:1636px;height:1px;background:#e3e6ea"></div>
<div class="a" style="left:307px;top:72.59px;font-size:11.5px;line-height:13.22px;color:#555;font-weight:bold;white-space:nowrap">Concera Kantoor Domotica 180</div>
<div class="a" style="left:485px;top:72.30px;font-size:12px;line-height:13.8px;color:#c8c8c8;font-weight:normal;white-space:nowrap">/</div>
<div class="a" style="left:496px;top:71.50px;font-size:13.4px;line-height:15.41px;color:#666;font-weight:normal;white-space:nowrap">Taglist</div>
<div class="a" style="left:280px;top:99px;width:1636px;height:48px;background:#fff"></div>
<div class="a" style="left:280px;top:147px;width:1636px;height:1px;background:#e3e6ea"></div>
<svg class="a" style="left:307.3px;top:114.8px" width="15" height="15" viewBox="0 0 16 16"><path fill="#c4c4c4" d="M1,1.5 C1,1.2 1.2,1 1.5,1 L7.3,1 C7.6,1 7.9,1.1 8.1,1.3 L15,8.2 C15.4,8.6 15.4,9.2 15,9.6 L9.6,15 C9.2,15.4 8.6,15.4 8.2,15 L1.3,8.1 C1.1,7.9 1,7.6 1,7.3Z"/><circle cx="4.3" cy="4.3" r="1.3" fill="#fff"/></svg>
<div class="a" style="left:328.7px;top:113.80px;font-size:15.3px;line-height:17.59px;color:#555;font-weight:normal;white-space:nowrap">Taglist</div>
<div class="a" style="left:306px;top:172px;width:1588px;height:1407px;background:#fff;border-top:1px solid #e4e7ea"></div>
<div class="a" style="left:336.5px;top:190px;width:29px;height:30px;background:#fff;border:1px solid #eeeeee;border-radius:3px"></div>
<svg class="a" style="left:346px;top:203px" width="9" height="5" viewBox="0 0 10 6"><path fill="#dddddd" d="M0,0 L10,0 L5,6Z"/></svg>
<div class="a" style="left:376px;top:190px;width:33px;height:30px;background:#2169a5;border-radius:3px"></div>
<svg class="a" style="left:386.5px;top:199px" width="12" height="12" viewBox="0 0 12 12"><path d="M6,1 L6,11 M1,6 L11,6" stroke="#fff" stroke-width="2" stroke-linecap="round"/></svg>
<div class="a" style="left:419px;top:190px;width:31px;height:30px;background:#1db28f;border-radius:3px"></div>
<svg class="a" style="left:428.5px;top:198.5px" width="12" height="14" viewBox="0 0 12 14"><path fill="#fff" stroke="#fff" stroke-width="1.2" stroke-linejoin="round" d="M1.5,1 L11,7 L1.5,13Z"/></svg>
<div class="a" style="left:460.5px;top:190px;width:33px;height:30px;background:#fff;border:1px solid #e0e0e0;border-radius:3px"></div>
<svg class="a" style="left:470px;top:198px" width="14" height="14" viewBox="0 0 16 16"><path d="M2.5,7 A5.6,5.6 0 0 1 12.6,4.2" fill="none" stroke="#555" stroke-width="1.8"/><path d="M13.5,9 A5.6,5.6 0 0 1 3.4,11.8" fill="none" stroke="#555" stroke-width="1.8"/><path fill="#555" d="M14.5,1 L14.5,6.5 L9,6.5Z M1.5,15 L1.5,9.5 L7,9.5Z"/></svg>
<div class="a" style="left:504.5px;top:190px;width:34px;height:30px;background:#fff;border:1px solid #e0e0e0;border-radius:3px"></div>
<svg class="a" style="left:514px;top:198.4px" width="15" height="13" viewBox="0 0 15 13"><path fill="#555" d="M0,1 Q0,0 1,0 L6.5,0 L10,3.5 L10,5.9 L7.2,5.9 Q6.3,5.9 6.3,6.8 Q6.3,7.7 7.2,7.7 L10,7.7 L10,12 Q10,13 9,13 L1,13 Q0,13 0,12Z"/><path d="M7.5,6.8 L13.3,6.8 M11.2,4.6 L13.6,6.8 L11.2,9" fill="none" stroke="#555" stroke-width="1.4" stroke-linecap="round" stroke-linejoin="round"/></svg>
<div class="a" style="left:549.5px;top:190px;width:379px;height:30px;background:#fff;border:1px solid #e3e3e3;border-radius:3px"></div>
<div class="a" style="left:622.5px;top:191px;width:29px;height:28px;background:#f0f0f0"></div>
<div class="a" style="left:622.5px;top:191px;width:1px;height:28px;background:#e3e3e3"></div>
<div class="a" style="left:651.4px;top:191px;width:1px;height:28px;background:#e3e3e3"></div>
<div class="a" style="left:679.5px;top:191px;width:1px;height:28px;background:#e3e3e3"></div>
<div class="a" style="left:708px;top:191px;width:1px;height:28px;background:#e3e3e3"></div>
<div class="a" style="left:736.3px;top:191px;width:1px;height:28px;background:#e3e3e3"></div>
<div class="a" style="left:764.4px;top:191px;width:1px;height:28px;background:#e3e3e3"></div>
<div class="a" style="left:793px;top:191px;width:1px;height:28px;background:#e3e3e3"></div>
<div class="a" style="left:821.5px;top:191px;width:1px;height:28px;background:#e3e3e3"></div>
<div class="a" style="left:850px;top:191px;width:1px;height:28px;background:#e3e3e3"></div>
<div class="a" style="left:878.3px;top:191px;width:1px;height:28px;background:#e3e3e3"></div>
<div class="a" style="left:560px;top:198.29px;font-size:13.4px;line-height:15.41px;color:#999;font-weight:normal;white-space:nowrap">Previous</div>
<div class="a" style="left:622.5px;width:28.899999999999977px;top:197.5px;line-height:17px;font-size:13.4px;color:#555;text-align:center">1</div>
<div class="a" style="left:651.4px;width:28.100000000000023px;top:197.5px;line-height:17px;font-size:13.4px;color:#555;text-align:center">2</div>
<div class="a" style="left:679.5px;width:28.5px;top:197.5px;line-height:17px;font-size:13.4px;color:#555;text-align:center">3</div>
<div class="a" style="left:708px;width:28.299999999999955px;top:197.5px;line-height:17px;font-size:13.4px;color:#555;text-align:center">4</div>
<div class="a" style="left:736.3px;width:28.100000000000023px;top:197.5px;line-height:17px;font-size:13.4px;color:#555;text-align:center">5</div>
<div class="a" style="left:764.4px;width:28.600000000000023px;top:197.5px;line-height:17px;font-size:13.4px;color:#555;text-align:center">6</div>
<div class="a" style="left:793px;width:28.5px;top:197.5px;line-height:17px;font-size:13.4px;color:#555;text-align:center">7</div>
<div class="a" style="left:821.5px;width:28.5px;top:197.5px;line-height:17px;font-size:13.4px;color:#555;text-align:center">8</div>
<div class="a" style="left:850px;width:28.299999999999955px;top:197.5px;line-height:17px;font-size:13.4px;color:#555;text-align:center">9</div>
<div class="a" style="left:890px;top:198.29px;font-size:13.4px;line-height:15.41px;color:#555;font-weight:normal;white-space:nowrap">Next</div>
<div class="a" style="left:321px;top:173px;width:1558px;height:1390px;overflow:hidden">
<div class="a" style="left:0px;top:68px;width:1600px;height:1px;background:#e8e8e8"></div>
<div class="a" style="left:8.300000000000011px;top:79.48px;font-size:13.6px;line-height:15.64px;color:#555;font-weight:bold;white-space:nowrap">ID</div>
<svg class="a" style="left:67px;top:79px" width="12" height="14" viewBox="0 0 12 14"><path d="M3,1 L3,13 M0.8,10.5 L3,13 L5.2,10.5" fill="none" stroke="#d4d4d4" stroke-width="1.6" stroke-linecap="round" stroke-linejoin="round"/><path d="M9,13 L9,1 M6.8,3.5 L9,1 L11.2,3.5" fill="none" stroke="#c8c8c8" stroke-width="1.6" stroke-linecap="round" stroke-linejoin="round"/></svg>
<div class="a" style="left:96px;top:79.48px;font-size:13.6px;line-height:15.64px;color:#555;font-weight:bold;white-space:nowrap">Status</div>
<svg class="a" style="left:205px;top:79px" width="12" height="14" viewBox="0 0 12 14"><path d="M3,1 L3,13 M0.8,10.5 L3,13 L5.2,10.5" fill="none" stroke="#d4d4d4" stroke-width="1.6" stroke-linecap="round" stroke-linejoin="round"/><path d="M9,13 L9,1 M6.8,3.5 L9,1 L11.2,3.5" fill="none" stroke="#c8c8c8" stroke-width="1.6" stroke-linecap="round" stroke-linejoin="round"/></svg>
<div class="a" style="left:234.39999999999998px;top:79.48px;font-size:13.6px;line-height:15.64px;color:#1f67a6;font-weight:bold;white-space:nowrap">Name/description</div>
<div class="a" style="left:522px;top:79.48px;font-size:13.6px;line-height:15.64px;color:#555;font-weight:bold;white-space:nowrap">Current value</div>
<svg class="a" style="left:731.5px;top:79px" width="12" height="14" viewBox="0 0 12 14"><path d="M3,1 L3,13 M0.8,10.5 L3,13 L5.2,10.5" fill="none" stroke="#d4d4d4" stroke-width="1.6" stroke-linecap="round" stroke-linejoin="round"/><path d="M9,13 L9,1 M6.8,3.5 L9,1 L11.2,3.5" fill="none" stroke="#c8c8c8" stroke-width="1.6" stroke-linecap="round" stroke-linejoin="round"/></svg>
<div class="a" style="left:759.4000000000001px;top:79.48px;font-size:13.6px;line-height:15.64px;color:#555;font-weight:bold;white-space:nowrap">Address</div>
<svg class="a" style="left:849px;top:79px" width="12" height="14" viewBox="0 0 12 14"><path d="M3,1 L3,13 M0.8,10.5 L3,13 L5.2,10.5" fill="none" stroke="#d4d4d4" stroke-width="1.6" stroke-linecap="round" stroke-linejoin="round"/><path d="M9,13 L9,1 M6.8,3.5 L9,1 L11.2,3.5" fill="none" stroke="#c8c8c8" stroke-width="1.6" stroke-linecap="round" stroke-linejoin="round"/></svg>
<div class="a" style="left:877.5999999999999px;top:79.48px;font-size:13.6px;line-height:15.64px;color:#555;font-weight:bold;white-space:nowrap">Time interval</div>
<div class="a" style="left:1011.3px;top:79.48px;font-size:13.6px;line-height:15.64px;color:#555;font-weight:bold;white-space:nowrap">State</div>
<svg class="a" style="left:1140px;top:79px" width="12" height="14" viewBox="0 0 12 14"><path d="M3,1 L3,13 M0.8,10.5 L3,13 L5.2,10.5" fill="none" stroke="#d4d4d4" stroke-width="1.6" stroke-linecap="round" stroke-linejoin="round"/><path d="M9,13 L9,1 M6.8,3.5 L9,1 L11.2,3.5" fill="none" stroke="#c8c8c8" stroke-width="1.6" stroke-linecap="round" stroke-linejoin="round"/></svg>
<div class="a" style="left:1169.2px;top:79.48px;font-size:13.6px;line-height:15.64px;color:#555;font-weight:bold;white-space:nowrap">Master</div>
<svg class="a" style="left:1278.5px;top:79px" width="12" height="14" viewBox="0 0 12 14"><path d="M3,1 L3,13 M0.8,10.5 L3,13 L5.2,10.5" fill="none" stroke="#d4d4d4" stroke-width="1.6" stroke-linecap="round" stroke-linejoin="round"/><path d="M9,13 L9,1 M6.8,3.5 L9,1 L11.2,3.5" fill="none" stroke="#c8c8c8" stroke-width="1.6" stroke-linecap="round" stroke-linejoin="round"/></svg>
<div class="a" style="left:1307px;top:79.48px;font-size:13.6px;line-height:15.64px;color:#555;font-weight:bold;white-space:nowrap">Invert</div>
<svg class="a" style="left:1416.4px;top:79px" width="12" height="14" viewBox="0 0 12 14"><path d="M3,1 L3,13 M0.8,10.5 L3,13 L5.2,10.5" fill="none" stroke="#d4d4d4" stroke-width="1.6" stroke-linecap="round" stroke-linejoin="round"/><path d="M9,13 L9,1 M6.8,3.5 L9,1 L11.2,3.5" fill="none" stroke="#c8c8c8" stroke-width="1.6" stroke-linecap="round" stroke-linejoin="round"/></svg>
<div class="a" style="left:1445.3px;top:79.48px;font-size:13.6px;line-height:15.64px;color:#555;font-weight:bold;white-space:nowrap">Last timestamp</div>
<div class="a" style="left:411px;top:81px;width:10px;height:10px;background:#1c74d8;border-radius:2px"></div>
<svg class="a" style="left:412.29999999999995px;top:82.80000000000001px" width="7.4" height="6.4" viewBox="0 0 14 11"><path d="M1.5,5.8 L5,9.3 L12.5,1.8" fill="none" stroke="#fff" stroke-width="2.6" stroke-linecap="round" stroke-linejoin="round"/></svg>
<div class="a" style="left:427px;top:82.79px;font-size:9.4px;line-height:10.81px;color:#555;font-weight:bold;white-space:nowrap">Show details</div>
<svg class="a" style="left:493px;top:79px" width="13.5" height="13.5" viewBox="0 0 14 14"><path d="M3,0.5 L3,10.5" stroke="#8db6da" stroke-width="2"/><path fill="#8db6da" d="M0.2,9.5 L5.8,9.5 L3,13.5Z"/><rect x="7.5" y="0.3" width="2.4" height="2.2" fill="#8db6da"/><rect x="7.5" y="3.6" width="3.8" height="2.2" fill="#8db6da"/><rect x="7.5" y="6.9" width="5.2" height="2.2" fill="#8db6da"/><rect x="7.5" y="10.2" width="6.2" height="2.4" fill="#8db6da"/></svg>
<div class="a" style="left:8.300000000000011px;top:102px;width:73.30000000000001px;height:33px;background:#fff;border:1px solid #dcdcdc"></div>
<div class="a" style="left:96px;top:102px;width:99.60000000000002px;height:33px;background:#fff;border:1px solid #dcdcdc"></div>
<div class="a" style="left:234.39999999999998px;top:102px;width:273.30000000000007px;height:33px;background:#fff;border:1px solid #dcdcdc"></div>
<div class="a" style="left:522px;top:102px;width:222.4000000000001px;height:33px;background:#fff;border:1px solid #dcdcdc"></div>
<div class="a" style="left:759.4000000000001px;top:102px;width:103.19999999999982px;height:33px;background:#fff;border:1px solid #dcdcdc"></div>
<div class="a" style="left:1445.3px;top:102px;width:133.70000000000005px;height:33px;background:#fff;border:1px solid #dcdcdc"></div>
<div class="a" style="left:103.5px;top:111.08px;font-size:12.9px;line-height:14.83px;color:#999;font-weight:normal;white-space:nowrap">Select some</div>
<div class="a" style="left:0px;top:143.5px;width:1600px;height:1.5px;background:#dedede"></div>
<div class="a" style="left:0px;top:224.5px;width:1600px;height:1px;background:transparent;border-top:1px dashed #e2e2e2"></div>
<div class="a" style="left:45px;top:159.06px;font-size:11.2px;line-height:12.88px;color:#555;font-weight:normal;white-space:nowrap;width:34.8px"><div style="width:34.8px;text-align:right">18.083</div></div>
<div class="a" style="left:96px;top:155.0px;width:52px;height:20px;background:#7d8d9a;border-radius:3px;border:1px solid #74838f"></div>
<div class="a" style="left:132px;top:157.2px;width:14.5px;height:16.2px;background:#fff;border-radius:1px"></div>
<div class="a" style="left:105.5px;top:159.52px;font-size:10.4px;line-height:11.96px;color:#fff;font-weight:bold;white-space:nowrap">On</div>
<div class="a" style="left:234.39999999999998px;top:158.98px;font-size:12.9px;line-height:14.83px;color:#555;font-weight:normal;white-space:nowrap"><span style="font-size:12.9px;color:#555">__example</span><span style="font-size:11.4px;color:#666"> (Integer, Decimal)</span></div>
<div class="a" style="left:234.39999999999998px;top:178.70px;font-size:11.3px;line-height:12.99px;color:#666;font-weight:normal;white-space:nowrap">Example tag</div>
<div class="a" style="left:234.29999999999995px;top:195.39999999999998px;width:92.5px;height:16px;background:#1a82d4;border-radius:3px"></div>
<svg class="a" style="left:238.5px;top:197.89999999999998px" width="8" height="11" viewBox="0 0 12 16"><path fill="#7fb8e8" d="M8.5,0 L1,9 L5.6,9 L3.5,16 L11,7 L6.4,7Z"/></svg>
<div class="a" style="left:252.29999999999995px;top:198.51px;font-size:9.9px;line-height:11.38px;color:#fff;font-weight:bold;white-space:nowrap">Bevat triggers</div>
<div class="a" style="left:523.2px;top:159.31px;font-size:13.2px;line-height:15.18px;color:#222;font-weight:normal;white-space:nowrap">0</div>
<svg class="a" style="left:1013.5px;top:160.0px" width="12" height="10" viewBox="0 0 14 11"><path d="M1.5,5.8 L5,9.3 L12.5,1.8" fill="none" stroke="#555" stroke-width="1.8" stroke-linecap="round" stroke-linejoin="round"/></svg>
<div class="a" style="left:1030.4px;top:159.03px;font-size:13px;line-height:14.95px;color:#555;font-weight:normal;white-space:nowrap">Ok</div>
<div class="a" style="left:1169.2px;top:155.5px;width:20px;height:20px;background:#fff;border:1px solid #a3a3a3;border-radius:3px"></div>
<div class="a" style="left:1307.2px;top:155.5px;width:20px;height:20px;background:#fff;border:1px solid #d9d9d9;border-radius:3px"></div>
<div class="a" style="left:1445.3px;top:158.41px;font-size:13.2px;line-height:15.18px;color:#555;font-weight:normal;white-space:nowrap">2025-07-10 16:39:3</div>
<div class="a" style="left:0px;top:308.7px;width:1600px;height:1px;background:transparent;border-top:1px dashed #e2e2e2"></div>
<div class="a" style="left:45px;top:240.06px;font-size:11.2px;line-height:12.88px;color:#555;font-weight:normal;white-space:nowrap;width:34.8px"><div style="width:34.8px;text-align:right">3.888</div></div>
<div class="a" style="left:96px;top:236.0px;width:52px;height:20px;background:#7d8d9a;border-radius:3px;border:1px solid #74838f"></div>
<div class="a" style="left:132px;top:238.2px;width:14.5px;height:16.2px;background:#fff;border-radius:1px"></div>
<div class="a" style="left:105.5px;top:240.52px;font-size:10.4px;line-height:11.96px;color:#fff;font-weight:bold;white-space:nowrap">On</div>
<div class="a" style="left:234.39999999999998px;top:239.98px;font-size:12.9px;line-height:14.83px;color:#555;font-weight:normal;white-space:nowrap"><span style="font-size:12.9px;color:#555">beneden_PIR_aanwezig</span><span style="font-size:11.4px;color:#666"> (Integer, Decimal)</span></div>
<div class="a" style="left:234.39999999999998px;top:259.70px;font-size:11.3px;line-height:12.99px;color:#666;font-weight:normal;white-space:nowrap">Beneden PIR Detectie aanwezigheid.</div>
<div class="a" style="left:234.29999999999995px;top:276.4px;width:139.3px;height:17.2px;background:#f2c9ee;border:1px solid #5a5a5a;border-radius:3px"></div>
<svg class="a" style="left:240px;top:279.9px" width="10" height="10" viewBox="0 0 16 16"><path fill="#8a1a86" d="M1,1.5 C1,1.2 1.2,1 1.5,1 L7.3,1 C7.6,1 7.9,1.1 8.1,1.3 L15,8.2 C15.4,8.6 15.4,9.2 15,9.6 L9.6,15 C9.2,15.4 8.6,15.4 8.2,15 L1.3,8.1 C1.1,7.9 1,7.6 1,7.3Z"/><circle cx="4.3" cy="4.3" r="1.3" fill="#f2c9ee"/></svg>
<div class="a" style="left:253.10000000000002px;top:280.16px;font-size:9.8px;line-height:11.27px;color:#2c4f70;font-weight:bold;white-space:nowrap">Tag group: CV Beneden</div>
<div class="a" style="left:523.2px;top:240.31px;font-size:13.2px;line-height:15.18px;color:#222;font-weight:normal;white-space:nowrap">0</div>
<svg class="a" style="left:1013.5px;top:241.0px" width="12" height="10" viewBox="0 0 14 11"><path d="M1.5,5.8 L5,9.3 L12.5,1.8" fill="none" stroke="#555" stroke-width="1.8" stroke-linecap="round" stroke-linejoin="round"/></svg>
<div class="a" style="left:1030.4px;top:240.03px;font-size:13px;line-height:14.95px;color:#555;font-weight:normal;white-space:nowrap">Ok</div>
<div class="a" style="left:1169.2px;top:236.5px;width:20px;height:20px;background:#fff;border:1px solid #a3a3a3;border-radius:3px"></div>
<div class="a" style="left:1307.2px;top:236.5px;width:20px;height:20px;background:#fff;border:1px solid #d9d9d9;border-radius:3px"></div>
<div class="a" style="left:1445.3px;top:239.41px;font-size:13.2px;line-height:15.18px;color:#555;font-weight:normal;white-space:nowrap">2025-09-15 08:03:0</div>
<div class="a" style="left:0px;top:393.5px;width:1600px;height:1px;background:transparent;border-top:1px dashed #e2e2e2"></div>
<div class="a" style="left:45px;top:324.26px;font-size:11.2px;line-height:12.88px;color:#555;font-weight:normal;white-space:nowrap;width:34.8px"><div style="width:34.8px;text-align:right">3.890</div></div>
<div class="a" style="left:96px;top:320.2px;width:52px;height:20px;background:#7d8d9a;border-radius:3px;border:1px solid #74838f"></div>
<div class="a" style="left:132px;top:322.4px;width:14.5px;height:16.2px;background:#fff;border-radius:1px"></div>
<div class="a" style="left:105.5px;top:324.72px;font-size:10.4px;line-height:11.96px;color:#fff;font-weight:bold;white-space:nowrap">On</div>
<div class="a" style="left:234.39999999999998px;top:324.18px;font-size:12.9px;line-height:14.83px;color:#555;font-weight:normal;white-space:nowrap"><span style="font-size:12.9px;color:#555">beneden_PIR_aanwezig_On</span><span style="font-size:11.4px;color:#666"> (Integer, Decimal)</span></div>
<div class="a" style="left:234.39999999999998px;top:343.90px;font-size:11.3px;line-height:12.99px;color:#666;font-weight:normal;white-space:nowrap">Beneden PIR Detectie aanwezigheid.</div>
<div class="a" style="left:234.29999999999995px;top:360.6px;width:139.3px;height:17.2px;background:#f2c9ee;border:1px solid #5a5a5a;border-radius:3px"></div>
<svg class="a" style="left:240px;top:364.1px" width="10" height="10" viewBox="0 0 16 16"><path fill="#8a1a86" d="M1,1.5 C1,1.2 1.2,1 1.5,1 L7.3,1 C7.6,1 7.9,1.1 8.1,1.3 L15,8.2 C15.4,8.6 15.4,9.2 15,9.6 L9.6,15 C9.2,15.4 8.6,15.4 8.2,15 L1.3,8.1 C1.1,7.9 1,7.6 1,7.3Z"/><circle cx="4.3" cy="4.3" r="1.3" fill="#f2c9ee"/></svg>
<div class="a" style="left:253.10000000000002px;top:364.37px;font-size:9.8px;line-height:11.27px;color:#2c4f70;font-weight:bold;white-space:nowrap">Tag group: CV Beneden</div>
<div class="a" style="left:523.2px;top:324.51px;font-size:13.2px;line-height:15.18px;color:#222;font-weight:normal;white-space:nowrap">18</div>
<svg class="a" style="left:1013.5px;top:325.2px" width="12" height="10" viewBox="0 0 14 11"><path d="M1.5,5.8 L5,9.3 L12.5,1.8" fill="none" stroke="#555" stroke-width="1.8" stroke-linecap="round" stroke-linejoin="round"/></svg>
<div class="a" style="left:1030.4px;top:324.22px;font-size:13px;line-height:14.95px;color:#555;font-weight:normal;white-space:nowrap">Ok</div>
<div class="a" style="left:1169.2px;top:320.7px;width:20px;height:20px;background:#fff;border:1px solid #a3a3a3;border-radius:3px"></div>
<div class="a" style="left:1307.2px;top:320.7px;width:20px;height:20px;background:#fff;border:1px solid #d9d9d9;border-radius:3px"></div>
<div class="a" style="left:1445.3px;top:323.61px;font-size:13.2px;line-height:15.18px;color:#555;font-weight:normal;white-space:nowrap">2025-09-15 08:03:0</div>
<div class="a" style="left:0px;top:497.29999999999995px;width:1600px;height:1px;background:transparent;border-top:1px dashed #e2e2e2"></div>
<div class="a" style="left:45px;top:409.06px;font-size:11.2px;line-height:12.88px;color:#555;font-weight:normal;white-space:nowrap;width:34.8px"><div style="width:34.8px;text-align:right">3.894</div></div>
<div class="a" style="left:96px;top:405.0px;width:52px;height:20px;background:#7d8d9a;border-radius:3px;border:1px solid #74838f"></div>
<div class="a" style="left:132px;top:407.20000000000005px;width:14.5px;height:16.2px;background:#fff;border-radius:1px"></div>
<div class="a" style="left:105.5px;top:409.52px;font-size:10.4px;line-height:11.96px;color:#fff;font-weight:bold;white-space:nowrap">On</div>
<div class="a" style="left:234.39999999999998px;top:408.98px;font-size:12.9px;line-height:14.83px;color:#555;font-weight:normal;white-space:nowrap"><span style="font-size:12.9px;color:#555">beneden_PIR_aanwezig_TimeCVoff</span><span style="font-size:11.4px;color:#666"> (Integer,</span></div>
<div class="a" style="left:234.39999999999998px;top:428.19px;font-size:12.9px;line-height:14.83px;color:#555;font-weight:normal;white-space:nowrap"><span style="font-size:11.4px;color:#666">Decimal)</span></div>
<div class="a" style="left:234.39999999999998px;top:447.91px;font-size:11.3px;line-height:12.99px;color:#666;font-weight:normal;white-space:nowrap">Beneden PIR Detectie aanwezigheid.</div>
<div class="a" style="left:234.29999999999995px;top:464.60000000000014px;width:139.3px;height:17.2px;background:#f2c9ee;border:1px solid #5a5a5a;border-radius:3px"></div>
<svg class="a" style="left:240px;top:468.10000000000014px" width="10" height="10" viewBox="0 0 16 16"><path fill="#8a1a86" d="M1,1.5 C1,1.2 1.2,1 1.5,1 L7.3,1 C7.6,1 7.9,1.1 8.1,1.3 L15,8.2 C15.4,8.6 15.4,9.2 15,9.6 L9.6,15 C9.2,15.4 8.6,15.4 8.2,15 L1.3,8.1 C1.1,7.9 1,7.6 1,7.3Z"/><circle cx="4.3" cy="4.3" r="1.3" fill="#f2c9ee"/></svg>
<div class="a" style="left:253.10000000000002px;top:468.37px;font-size:9.8px;line-height:11.27px;color:#2c4f70;font-weight:bold;white-space:nowrap">Tag group: CV Beneden</div>
<div class="a" style="left:523.2px;top:409.31px;font-size:13.2px;line-height:15.18px;color:#222;font-weight:normal;white-space:nowrap">1757917986</div>
<svg class="a" style="left:1013.5px;top:410.0px" width="12" height="10" viewBox="0 0 14 11"><path d="M1.5,5.8 L5,9.3 L12.5,1.8" fill="none" stroke="#555" stroke-width="1.8" stroke-linecap="round" stroke-linejoin="round"/></svg>
<div class="a" style="left:1030.4px;top:409.02px;font-size:13px;line-height:14.95px;color:#555;font-weight:normal;white-space:nowrap">Ok</div>
<div class="a" style="left:1169.2px;top:405.5px;width:20px;height:20px;background:#fff;border:1px solid #a3a3a3;border-radius:3px"></div>
<div class="a" style="left:1307.2px;top:405.5px;width:20px;height:20px;background:#fff;border:1px solid #d9d9d9;border-radius:3px"></div>
<div class="a" style="left:1445.3px;top:408.41px;font-size:13.2px;line-height:15.18px;color:#555;font-weight:normal;white-space:nowrap">2025-09-15 08:03:0</div>
<div class="a" style="left:0px;top:637.7px;width:1600px;height:1px;background:transparent;border-top:1px dashed #e2e2e2"></div>
<div class="a" style="left:45px;top:512.86px;font-size:11.2px;line-height:12.88px;color:#555;font-weight:normal;white-space:nowrap;width:34.8px"><div style="width:34.8px;text-align:right">4.110</div></div>
<div class="a" style="left:96px;top:508.79999999999995px;width:52px;height:20px;background:#7d8d9a;border-radius:3px;border:1px solid #74838f"></div>
<div class="a" style="left:132px;top:511.0px;width:14.5px;height:16.2px;background:#fff;border-radius:1px"></div>
<div class="a" style="left:105.5px;top:513.32px;font-size:10.4px;line-height:11.96px;color:#fff;font-weight:bold;white-space:nowrap">On</div>
<div class="a" style="left:234.39999999999998px;top:512.78px;font-size:12.9px;line-height:14.83px;color:#555;font-weight:normal;white-space:nowrap"><span style="font-size:12.9px;color:#555">beneden_PIR_aanwezig_TimeCVoff_dateTime</span></div>
<div class="a" style="left:234.39999999999998px;top:531.99px;font-size:12.9px;line-height:14.83px;color:#555;font-weight:normal;white-space:nowrap"><span style="font-size:11.4px;color:#666">&nbsp;(String)</span></div>
<div class="a" style="left:234.39999999999998px;top:551.53px;font-size:11.6px;line-height:13.34px;color:#666;font-weight:normal;white-space:nowrap">Automatically generated tag from script 'CV</div>
<div class="a" style="left:234.39999999999998px;top:570.73px;font-size:11.6px;line-height:13.34px;color:#666;font-weight:normal;white-space:nowrap">Installatie (inschakelen / uitschakelen / vrijgeven)'</div>
<div class="a" style="left:234.39999999999998px;top:590.11px;font-size:11.3px;line-height:12.99px;color:#666;font-weight:normal;white-space:nowrap">(ID: #8)</div>
<div class="a" style="left:234.29999999999995px;top:606.8000000000002px;width:139.3px;height:17.2px;background:#f2c9ee;border:1px solid #5a5a5a;border-radius:3px"></div>
<svg class="a" style="left:240px;top:610.3000000000002px" width="10" height="10" viewBox="0 0 16 16"><path fill="#8a1a86" d="M1,1.5 C1,1.2 1.2,1 1.5,1 L7.3,1 C7.6,1 7.9,1.1 8.1,1.3 L15,8.2 C15.4,8.6 15.4,9.2 15,9.6 L9.6,15 C9.2,15.4 8.6,15.4 8.2,15 L1.3,8.1 C1.1,7.9 1,7.6 1,7.3Z"/><circle cx="4.3" cy="4.3" r="1.3" fill="#f2c9ee"/></svg>
<div class="a" style="left:253.10000000000002px;top:610.57px;font-size:9.8px;line-height:11.27px;color:#2c4f70;font-weight:bold;white-space:nowrap">Tag group: CV Beneden</div>
<div class="a" style="left:523.2px;top:513.11px;font-size:13.2px;line-height:15.18px;color:#222;font-weight:normal;white-space:nowrap">2025-09-15 08:33:06 +02:00</div>
<svg class="a" style="left:1013.5px;top:513.8px" width="12" height="10" viewBox="0 0 14 11"><path d="M1.5,5.8 L5,9.3 L12.5,1.8" fill="none" stroke="#555" stroke-width="1.8" stroke-linecap="round" stroke-linejoin="round"/></svg>
<div class="a" style="left:1030.4px;top:512.82px;font-size:13px;line-height:14.95px;color:#555;font-weight:normal;white-space:nowrap">Ok</div>
<div class="a" style="left:1169.2px;top:509.29999999999995px;width:20px;height:20px;background:#fff;border:1px solid #a3a3a3;border-radius:3px"></div>
<div class="a" style="left:1307.2px;top:509.29999999999995px;width:20px;height:20px;background:#fff;border:1px solid #d9d9d9;border-radius:3px"></div>
<div class="a" style="left:1445.3px;top:512.21px;font-size:13.2px;line-height:15.18px;color:#555;font-weight:normal;white-space:nowrap">2025-09-15 08:03:0</div>
<div class="a" style="left:0px;top:741.8px;width:1600px;height:1px;background:transparent;border-top:1px dashed #e2e2e2"></div>
<div class="a" style="left:45px;top:653.26px;font-size:11.2px;line-height:12.88px;color:#555;font-weight:normal;white-space:nowrap;width:34.8px"><div style="width:34.8px;text-align:right">3.891</div></div>
<div class="a" style="left:96px;top:649.2px;width:52px;height:20px;background:#7d8d9a;border-radius:3px;border:1px solid #74838f"></div>
<div class="a" style="left:132px;top:651.4000000000001px;width:14.5px;height:16.2px;background:#fff;border-radius:1px"></div>
<div class="a" style="left:105.5px;top:653.72px;font-size:10.4px;line-height:11.96px;color:#fff;font-weight:bold;white-space:nowrap">On</div>
<div class="a" style="left:234.39999999999998px;top:653.19px;font-size:12.9px;line-height:14.83px;color:#555;font-weight:normal;white-space:nowrap"><span style="font-size:12.9px;color:#555">beneden_PIR_aanwezig_TimeCVon</span><span style="font-size:11.4px;color:#666"> (Integer,</span></div>
<div class="a" style="left:234.39999999999998px;top:672.39px;font-size:12.9px;line-height:14.83px;color:#555;font-weight:normal;white-space:nowrap"><span style="font-size:11.4px;color:#666">Decimal)</span></div>
<div class="a" style="left:234.39999999999998px;top:692.11px;font-size:11.3px;line-height:12.99px;color:#666;font-weight:normal;white-space:nowrap">Beneden PIR Detectie aanwezigheid.</div>
<div class="a" style="left:234.29999999999995px;top:708.8000000000002px;width:139.3px;height:17.2px;background:#f2c9ee;border:1px solid #5a5a5a;border-radius:3px"></div>
<svg class="a" style="left:240px;top:712.3000000000002px" width="10" height="10" viewBox="0 0 16 16"><path fill="#8a1a86" d="M1,1.5 C1,1.2 1.2,1 1.5,1 L7.3,1 C7.6,1 7.9,1.1 8.1,1.3 L15,8.2 C15.4,8.6 15.4,9.2 15,9.6 L9.6,15 C9.2,15.4 8.6,15.4 8.2,15 L1.3,8.1 C1.1,7.9 1,7.6 1,7.3Z"/><circle cx="4.3" cy="4.3" r="1.3" fill="#f2c9ee"/></svg>
<div class="a" style="left:253.10000000000002px;top:712.57px;font-size:9.8px;line-height:11.27px;color:#2c4f70;font-weight:bold;white-space:nowrap">Tag group: CV Beneden</div>
<div class="a" style="left:523.2px;top:653.51px;font-size:13.2px;line-height:15.18px;color:#222;font-weight:normal;white-space:nowrap">1757915836</div>
<svg class="a" style="left:1013.5px;top:654.2px" width="12" height="10" viewBox="0 0 14 11"><path d="M1.5,5.8 L5,9.3 L12.5,1.8" fill="none" stroke="#555" stroke-width="1.8" stroke-linecap="round" stroke-linejoin="round"/></svg>
<div class="a" style="left:1030.4px;top:653.23px;font-size:13px;line-height:14.95px;color:#555;font-weight:normal;white-space:nowrap">Ok</div>
<div class="a" style="left:1169.2px;top:649.7px;width:20px;height:20px;background:#fff;border:1px solid #a3a3a3;border-radius:3px"></div>
<div class="a" style="left:1307.2px;top:649.7px;width:20px;height:20px;background:#fff;border:1px solid #d9d9d9;border-radius:3px"></div>
<div class="a" style="left:1445.3px;top:652.61px;font-size:13.2px;line-height:15.18px;color:#555;font-weight:normal;white-space:nowrap">2025-09-15 07:52:1</div>
<div class="a" style="left:0px;top:882.9000000000001px;width:1600px;height:1px;background:transparent;border-top:1px dashed #e2e2e2"></div>
<div class="a" style="left:45px;top:757.36px;font-size:11.2px;line-height:12.88px;color:#555;font-weight:normal;white-space:nowrap;width:34.8px"><div style="width:34.8px;text-align:right">4.112</div></div>
<div class="a" style="left:96px;top:753.3px;width:52px;height:20px;background:#7d8d9a;border-radius:3px;border:1px solid #74838f"></div>
<div class="a" style="left:132px;top:755.5px;width:14.5px;height:16.2px;background:#fff;border-radius:1px"></div>
<div class="a" style="left:105.5px;top:757.82px;font-size:10.4px;line-height:11.96px;color:#fff;font-weight:bold;white-space:nowrap">On</div>
<div class="a" style="left:234.39999999999998px;top:757.28px;font-size:12.9px;line-height:14.83px;color:#555;font-weight:normal;white-space:nowrap"><span style="font-size:12.9px;color:#555">beneden_PIR_aanwezig_TimeCVon_dateTime</span></div>
<div class="a" style="left:234.39999999999998px;top:776.49px;font-size:12.9px;line-height:14.83px;color:#555;font-weight:normal;white-space:nowrap"><span style="font-size:11.4px;color:#666">&nbsp;(String)</span></div>
<div class="a" style="left:234.39999999999998px;top:796.03px;font-size:11.6px;line-height:13.34px;color:#666;font-weight:normal;white-space:nowrap">Automatically generated tag from script 'CV</div>
<div class="a" style="left:234.39999999999998px;top:815.23px;font-size:11.6px;line-height:13.34px;color:#666;font-weight:normal;white-space:nowrap">Installatie (inschakelen / uitschakelen / vrijgeven)'</div>
<div class="a" style="left:234.39999999999998px;top:834.61px;font-size:11.3px;line-height:12.99px;color:#666;font-weight:normal;white-space:nowrap">(ID: #8)</div>
<div class="a" style="left:234.29999999999995px;top:851.3000000000002px;width:139.3px;height:17.2px;background:#f2c9ee;border:1px solid #5a5a5a;border-radius:3px"></div>
<svg class="a" style="left:240px;top:854.8000000000002px" width="10" height="10" viewBox="0 0 16 16"><path fill="#8a1a86" d="M1,1.5 C1,1.2 1.2,1 1.5,1 L7.3,1 C7.6,1 7.9,1.1 8.1,1.3 L15,8.2 C15.4,8.6 15.4,9.2 15,9.6 L9.6,15 C9.2,15.4 8.6,15.4 8.2,15 L1.3,8.1 C1.1,7.9 1,7.6 1,7.3Z"/><circle cx="4.3" cy="4.3" r="1.3" fill="#f2c9ee"/></svg>
<div class="a" style="left:253.10000000000002px;top:855.07px;font-size:9.8px;line-height:11.27px;color:#2c4f70;font-weight:bold;white-space:nowrap">Tag group: CV Beneden</div>
<div class="a" style="left:523.2px;top:757.61px;font-size:13.2px;line-height:15.18px;color:#222;font-weight:normal;white-space:nowrap">2025-09-15 07:57:16 +02:00</div>
<svg class="a" style="left:1013.5px;top:758.3px" width="12" height="10" viewBox="0 0 14 11"><path d="M1.5,5.8 L5,9.3 L12.5,1.8" fill="none" stroke="#555" stroke-width="1.8" stroke-linecap="round" stroke-linejoin="round"/></svg>
<div class="a" style="left:1030.4px;top:757.32px;font-size:13px;line-height:14.95px;color:#555;font-weight:normal;white-space:nowrap">Ok</div>
<div class="a" style="left:1169.2px;top:753.8px;width:20px;height:20px;background:#fff;border:1px solid #a3a3a3;border-radius:3px"></div>
<div class="a" style="left:1307.2px;top:753.8px;width:20px;height:20px;background:#fff;border:1px solid #d9d9d9;border-radius:3px"></div>
<div class="a" style="left:1445.3px;top:756.71px;font-size:13.2px;line-height:15.18px;color:#555;font-weight:normal;white-space:nowrap">2025-09-15 07:52:1</div>
<div class="a" style="left:0px;top:967.0999999999999px;width:1600px;height:1px;background:transparent;border-top:1px dashed #e2e2e2"></div>
<div class="a" style="left:45px;top:898.46px;font-size:11.2px;line-height:12.88px;color:#555;font-weight:normal;white-space:nowrap;width:34.8px"><div style="width:34.8px;text-align:right">3.889</div></div>
<div class="a" style="left:96px;top:894.4000000000001px;width:52px;height:20px;background:#7d8d9a;border-radius:3px;border:1px solid #74838f"></div>
<div class="a" style="left:132px;top:896.6000000000001px;width:14.5px;height:16.2px;background:#fff;border-radius:1px"></div>
<div class="a" style="left:105.5px;top:898.92px;font-size:10.4px;line-height:11.96px;color:#fff;font-weight:bold;white-space:nowrap">On</div>
<div class="a" style="left:234.39999999999998px;top:898.39px;font-size:12.9px;line-height:14.83px;color:#555;font-weight:normal;white-space:nowrap"><span style="font-size:12.9px;color:#555">boven_PIR_aanwezig</span><span style="font-size:11.4px;color:#666"> (Integer, Decimal)</span></div>
<div class="a" style="left:234.39999999999998px;top:918.11px;font-size:11.3px;line-height:12.99px;color:#666;font-weight:normal;white-space:nowrap">Boven PIR Detectie aanwezigheid.</div>
<div class="a" style="left:234.29999999999995px;top:934.8000000000002px;width:126.5px;height:17.2px;background:#f5d9bf;border:1px solid #5a5a5a;border-radius:3px"></div>
<svg class="a" style="left:240px;top:938.3000000000002px" width="10" height="10" viewBox="0 0 16 16"><path fill="#8f4a12" d="M1,1.5 C1,1.2 1.2,1 1.5,1 L7.3,1 C7.6,1 7.9,1.1 8.1,1.3 L15,8.2 C15.4,8.6 15.4,9.2 15,9.6 L9.6,15 C9.2,15.4 8.6,15.4 8.2,15 L1.3,8.1 C1.1,7.9 1,7.6 1,7.3Z"/><circle cx="4.3" cy="4.3" r="1.3" fill="#f5d9bf"/></svg>
<div class="a" style="left:253.10000000000002px;top:938.57px;font-size:9.8px;line-height:11.27px;color:#2c4f70;font-weight:bold;white-space:nowrap">Tag group: CV Boven</div>
<div class="a" style="left:523.2px;top:898.71px;font-size:13.2px;line-height:15.18px;color:#222;font-weight:normal;white-space:nowrap">0</div>
<svg class="a" style="left:1013.5px;top:899.4000000000001px" width="12" height="10" viewBox="0 0 14 11"><path d="M1.5,5.8 L5,9.3 L12.5,1.8" fill="none" stroke="#555" stroke-width="1.8" stroke-linecap="round" stroke-linejoin="round"/></svg>
<div class="a" style="left:1030.4px;top:898.43px;font-size:13px;line-height:14.95px;color:#555;font-weight:normal;white-space:nowrap">Ok</div>
<div class="a" style="left:1169.2px;top:894.9000000000001px;width:20px;height:20px;background:#fff;border:1px solid #a3a3a3;border-radius:3px"></div>
<div class="a" style="left:1307.2px;top:894.9000000000001px;width:20px;height:20px;background:#fff;border:1px solid #d9d9d9;border-radius:3px"></div>
<div class="a" style="left:1445.3px;top:897.81px;font-size:13.2px;line-height:15.18px;color:#555;font-weight:normal;white-space:nowrap">2025-09-15 08:04:0</div>
<div class="a" style="left:0px;top:1051.6px;width:1600px;height:1px;background:transparent;border-top:1px dashed #e2e2e2"></div>
<div class="a" style="left:45px;top:982.66px;font-size:11.2px;line-height:12.88px;color:#555;font-weight:normal;white-space:nowrap;width:34.8px"><div style="width:34.8px;text-align:right">3.893</div></div>
<div class="a" style="left:96px;top:978.5999999999999px;width:52px;height:20px;background:#7d8d9a;border-radius:3px;border:1px solid #74838f"></div>
<div class="a" style="left:132px;top:980.8px;width:14.5px;height:16.2px;background:#fff;border-radius:1px"></div>
<div class="a" style="left:105.5px;top:983.12px;font-size:10.4px;line-height:11.96px;color:#fff;font-weight:bold;white-space:nowrap">On</div>
<div class="a" style="left:234.39999999999998px;top:982.59px;font-size:12.9px;line-height:14.83px;color:#555;font-weight:normal;white-space:nowrap"><span style="font-size:12.9px;color:#555">boven_PIR_aanwezig_On</span><span style="font-size:11.4px;color:#666"> (Integer, Decimal)</span></div>
<div class="a" style="left:234.39999999999998px;top:1002.30px;font-size:11.3px;line-height:12.99px;color:#666;font-weight:normal;white-space:nowrap">Boven PIR Detectie aanwezigheid.</div>
<div class="a" style="left:234.29999999999995px;top:1019.0px;width:126.5px;height:17.2px;background:#f5d9bf;border:1px solid #5a5a5a;border-radius:3px"></div>
<svg class="a" style="left:240px;top:1022.5px" width="10" height="10" viewBox="0 0 16 16"><path fill="#8f4a12" d="M1,1.5 C1,1.2 1.2,1 1.5,1 L7.3,1 C7.6,1 7.9,1.1 8.1,1.3 L15,8.2 C15.4,8.6 15.4,9.2 15,9.6 L9.6,15 C9.2,15.4 8.6,15.4 8.2,15 L1.3,8.1 C1.1,7.9 1,7.6 1,7.3Z"/><circle cx="4.3" cy="4.3" r="1.3" fill="#f5d9bf"/></svg>
<div class="a" style="left:253.10000000000002px;top:1022.77px;font-size:9.8px;line-height:11.27px;color:#2c4f70;font-weight:bold;white-space:nowrap">Tag group: CV Boven</div>
<div class="a" style="left:523.2px;top:982.91px;font-size:13.2px;line-height:15.18px;color:#222;font-weight:normal;white-space:nowrap">7</div>
<svg class="a" style="left:1013.5px;top:983.5999999999999px" width="12" height="10" viewBox="0 0 14 11"><path d="M1.5,5.8 L5,9.3 L12.5,1.8" fill="none" stroke="#555" stroke-width="1.8" stroke-linecap="round" stroke-linejoin="round"/></svg>
<div class="a" style="left:1030.4px;top:982.62px;font-size:13px;line-height:14.95px;color:#555;font-weight:normal;white-space:nowrap">Ok</div>
<div class="a" style="left:1169.2px;top:979.0999999999999px;width:20px;height:20px;background:#fff;border:1px solid #a3a3a3;border-radius:3px"></div>
<div class="a" style="left:1307.2px;top:979.0999999999999px;width:20px;height:20px;background:#fff;border:1px solid #d9d9d9;border-radius:3px"></div>
<div class="a" style="left:1445.3px;top:982.01px;font-size:13.2px;line-height:15.18px;color:#555;font-weight:normal;white-space:nowrap">2025-09-15 08:04:0</div>
<div class="a" style="left:0px;top:1154.9px;width:1600px;height:1px;background:transparent;border-top:1px dashed #e2e2e2"></div>
<div class="a" style="left:45px;top:1067.16px;font-size:11.2px;line-height:12.88px;color:#555;font-weight:normal;white-space:nowrap;width:34.8px"><div style="width:34.8px;text-align:right">3.895</div></div>
<div class="a" style="left:96px;top:1063.1px;width:52px;height:20px;background:#7d8d9a;border-radius:3px;border:1px solid #74838f"></div>
<div class="a" style="left:132px;top:1065.3px;width:14.5px;height:16.2px;background:#fff;border-radius:1px"></div>
<div class="a" style="left:105.5px;top:1067.62px;font-size:10.4px;line-height:11.96px;color:#fff;font-weight:bold;white-space:nowrap">On</div>
<div class="a" style="left:234.39999999999998px;top:1067.09px;font-size:12.9px;line-height:14.83px;color:#555;font-weight:normal;white-space:nowrap"><span style="font-size:12.9px;color:#555">boven_PIR_aanwezig_TimeCVoff</span><span style="font-size:11.4px;color:#666"> (Integer,</span></div>
<div class="a" style="left:234.39999999999998px;top:1086.29px;font-size:12.9px;line-height:14.83px;color:#555;font-weight:normal;white-space:nowrap"><span style="font-size:11.4px;color:#666">Decimal)</span></div>
<div class="a" style="left:234.39999999999998px;top:1106.01px;font-size:11.3px;line-height:12.99px;color:#666;font-weight:normal;white-space:nowrap">Boven PIR Detectie aanwezigheid.</div>
<div class="a" style="left:234.29999999999995px;top:1122.7px;width:126.5px;height:17.2px;background:#f5d9bf;border:1px solid #5a5a5a;border-radius:3px"></div>
<svg class="a" style="left:240px;top:1126.2px" width="10" height="10" viewBox="0 0 16 16"><path fill="#8f4a12" d="M1,1.5 C1,1.2 1.2,1 1.5,1 L7.3,1 C7.6,1 7.9,1.1 8.1,1.3 L15,8.2 C15.4,8.6 15.4,9.2 15,9.6 L9.6,15 C9.2,15.4 8.6,15.4 8.2,15 L1.3,8.1 C1.1,7.9 1,7.6 1,7.3Z"/><circle cx="4.3" cy="4.3" r="1.3" fill="#f5d9bf"/></svg>
<div class="a" style="left:253.10000000000002px;top:1126.47px;font-size:9.8px;line-height:11.27px;color:#2c4f70;font-weight:bold;white-space:nowrap">Tag group: CV Boven</div>
<div class="a" style="left:523.2px;top:1067.41px;font-size:13.2px;line-height:15.18px;color:#222;font-weight:normal;white-space:nowrap">1757919846</div>
<svg class="a" style="left:1013.5px;top:1068.1px" width="12" height="10" viewBox="0 0 14 11"><path d="M1.5,5.8 L5,9.3 L12.5,1.8" fill="none" stroke="#555" stroke-width="1.8" stroke-linecap="round" stroke-linejoin="round"/></svg>
<div class="a" style="left:1030.4px;top:1067.12px;font-size:13px;line-height:14.95px;color:#555;font-weight:normal;white-space:nowrap">Ok</div>
<div class="a" style="left:1169.2px;top:1063.6px;width:20px;height:20px;background:#fff;border:1px solid #a3a3a3;border-radius:3px"></div>
<div class="a" style="left:1307.2px;top:1063.6px;width:20px;height:20px;background:#fff;border:1px solid #d9d9d9;border-radius:3px"></div>
<div class="a" style="left:1445.3px;top:1066.51px;font-size:13.2px;line-height:15.18px;color:#555;font-weight:normal;white-space:nowrap">2025-09-15 08:04:0</div>
<div class="a" style="left:0px;top:1295.5px;width:1600px;height:1px;background:transparent;border-top:1px dashed #e2e2e2"></div>
<div class="a" style="left:45px;top:1170.46px;font-size:11.2px;line-height:12.88px;color:#555;font-weight:normal;white-space:nowrap;width:34.8px"><div style="width:34.8px;text-align:right">4.111</div></div>
<div class="a" style="left:96px;top:1166.4px;width:52px;height:20px;background:#7d8d9a;border-radius:3px;border:1px solid #74838f"></div>
<div class="a" style="left:132px;top:1168.6000000000001px;width:14.5px;height:16.2px;background:#fff;border-radius:1px"></div>
<div class="a" style="left:105.5px;top:1170.92px;font-size:10.4px;line-height:11.96px;color:#fff;font-weight:bold;white-space:nowrap">On</div>
<div class="a" style="left:234.39999999999998px;top:1170.39px;font-size:12.9px;line-height:14.83px;color:#555;font-weight:normal;white-space:nowrap"><span style="font-size:12.9px;color:#555">boven_PIR_aanwezig_TimeCVoff_dateTime</span></div>
<div class="a" style="left:234.39999999999998px;top:1189.59px;font-size:12.9px;line-height:14.83px;color:#555;font-weight:normal;white-space:nowrap"><span style="font-size:11.4px;color:#666">(String)</span></div>
<div class="a" style="left:234.39999999999998px;top:1209.13px;font-size:11.6px;line-height:13.34px;color:#666;font-weight:normal;white-space:nowrap">Automatically generated tag from script 'CV</div>
<div class="a" style="left:234.39999999999998px;top:1228.33px;font-size:11.6px;line-height:13.34px;color:#666;font-weight:normal;white-space:nowrap">Installatie (inschakelen / uitschakelen / vrijgeven)'</div>
<div class="a" style="left:234.39999999999998px;top:1247.71px;font-size:11.3px;line-height:12.99px;color:#666;font-weight:normal;white-space:nowrap">(ID: #8)</div>
<div class="a" style="left:234.29999999999995px;top:1264.4000000000003px;width:126.5px;height:17.2px;background:#f5d9bf;border:1px solid #5a5a5a;border-radius:3px"></div>
<svg class="a" style="left:240px;top:1267.9000000000003px" width="10" height="10" viewBox="0 0 16 16"><path fill="#8f4a12" d="M1,1.5 C1,1.2 1.2,1 1.5,1 L7.3,1 C7.6,1 7.9,1.1 8.1,1.3 L15,8.2 C15.4,8.6 15.4,9.2 15,9.6 L9.6,15 C9.2,15.4 8.6,15.4 8.2,15 L1.3,8.1 C1.1,7.9 1,7.6 1,7.3Z"/><circle cx="4.3" cy="4.3" r="1.3" fill="#f5d9bf"/></svg>
<div class="a" style="left:253.10000000000002px;top:1268.17px;font-size:9.8px;line-height:11.27px;color:#2c4f70;font-weight:bold;white-space:nowrap">Tag group: CV Boven</div>
<div class="a" style="left:523.2px;top:1170.71px;font-size:13.2px;line-height:15.18px;color:#222;font-weight:normal;white-space:nowrap">2025-09-15 09:04:06 +02:00</div>
<svg class="a" style="left:1013.5px;top:1171.4px" width="12" height="10" viewBox="0 0 14 11"><path d="M1.5,5.8 L5,9.3 L12.5,1.8" fill="none" stroke="#555" stroke-width="1.8" stroke-linecap="round" stroke-linejoin="round"/></svg>
<div class="a" style="left:1030.4px;top:1170.43px;font-size:13px;line-height:14.95px;color:#555;font-weight:normal;white-space:nowrap">Ok</div>
<div class="a" style="left:1169.2px;top:1166.9px;width:20px;height:20px;background:#fff;border:1px solid #a3a3a3;border-radius:3px"></div>
<div class="a" style="left:1307.2px;top:1166.9px;width:20px;height:20px;background:#fff;border:1px solid #d9d9d9;border-radius:3px"></div>
<div class="a" style="left:1445.3px;top:1169.81px;font-size:13.2px;line-height:15.18px;color:#555;font-weight:normal;white-space:nowrap">2025-09-15 08:04:0</div>
<div class="a" style="left:45px;top:1311.06px;font-size:11.2px;line-height:12.88px;color:#555;font-weight:normal;white-space:nowrap;width:34.8px"><div style="width:34.8px;text-align:right">3.892</div></div>
<div class="a" style="left:96px;top:1307.0px;width:52px;height:20px;background:#7d8d9a;border-radius:3px;border:1px solid #74838f"></div>
<div class="a" style="left:132px;top:1309.2px;width:14.5px;height:16.2px;background:#fff;border-radius:1px"></div>
<div class="a" style="left:105.5px;top:1311.52px;font-size:10.4px;line-height:11.96px;color:#fff;font-weight:bold;white-space:nowrap">On</div>
<div class="a" style="left:234.39999999999998px;top:1310.99px;font-size:12.9px;line-height:14.83px;color:#555;font-weight:normal;white-space:nowrap"><span style="font-size:12.9px;color:#555">boven_PIR_aanwezig_TimeCVon</span><span style="font-size:11.4px;color:#666"> (Integer,</span></div>
<div class="a" style="left:234.39999999999998px;top:1330.19px;font-size:12.9px;line-height:14.83px;color:#555;font-weight:normal;white-space:nowrap"><span style="font-size:11.4px;color:#666">Decimal)</span></div>
<div class="a" style="left:234.39999999999998px;top:1349.91px;font-size:11.3px;line-height:12.99px;color:#666;font-weight:normal;white-space:nowrap">Boven PIR Detectie aanwezigheid.</div>
<div class="a" style="left:234.29999999999995px;top:1366.6000000000001px;width:126.5px;height:17.2px;background:#f5d9bf;border:1px solid #5a5a5a;border-radius:3px"></div>
<svg class="a" style="left:240px;top:1370.1000000000001px" width="10" height="10" viewBox="0 0 16 16"><path fill="#8f4a12" d="M1,1.5 C1,1.2 1.2,1 1.5,1 L7.3,1 C7.6,1 7.9,1.1 8.1,1.3 L15,8.2 C15.4,8.6 15.4,9.2 15,9.6 L9.6,15 C9.2,15.4 8.6,15.4 8.2,15 L1.3,8.1 C1.1,7.9 1,7.6 1,7.3Z"/><circle cx="4.3" cy="4.3" r="1.3" fill="#f5d9bf"/></svg>
<div class="a" style="left:253.10000000000002px;top:1370.37px;font-size:9.8px;line-height:11.27px;color:#2c4f70;font-weight:bold;white-space:nowrap">Tag group: CV Boven</div>
<div class="a" style="left:523.2px;top:1311.31px;font-size:13.2px;line-height:15.18px;color:#222;font-weight:normal;white-space:nowrap">1757915656</div>
<svg class="a" style="left:1013.5px;top:1312.0px" width="12" height="10" viewBox="0 0 14 11"><path d="M1.5,5.8 L5,9.3 L12.5,1.8" fill="none" stroke="#555" stroke-width="1.8" stroke-linecap="round" stroke-linejoin="round"/></svg>
<div class="a" style="left:1030.4px;top:1311.03px;font-size:13px;line-height:14.95px;color:#555;font-weight:normal;white-space:nowrap">Ok</div>
<div class="a" style="left:1169.2px;top:1307.5px;width:20px;height:20px;background:#fff;border:1px solid #a3a3a3;border-radius:3px"></div>
<div class="a" style="left:1307.2px;top:1307.5px;width:20px;height:20px;background:#fff;border:1px solid #d9d9d9;border-radius:3px"></div>
<div class="a" style="left:1445.3px;top:1310.41px;font-size:13.2px;line-height:15.18px;color:#555;font-weight:normal;white-space:nowrap">2025-09-15 07:52:1</div>
</div>
<div class="a" style="left:1878.5px;top:173px;width:15.5px;height:1406px;background:#fafafa"></div>
<svg class="a" style="left:1882px;top:178.5px" width="9" height="6.6" viewBox="0 0 10 10" preserveAspectRatio="none"><path fill="#888" stroke="#888" stroke-width="2" stroke-linejoin="round" d="M1,9 L5,1.2 L9,9Z"/></svg>
<div class="a" style="left:1882.3px;top:191px;width:8.8px;height:249px;background:#8a8a8a;border-radius:4.4px"></div>
<svg class="a" style="left:1882px;top:1553.1px" width="9" height="6.6" viewBox="0 0 10 10" preserveAspectRatio="none"><path fill="#888" stroke="#888" stroke-width="2" stroke-linejoin="round" d="M1,1 L9,1 L5,8.8Z"/></svg>
<div class="a" style="left:306px;top:1563px;width:1573px;height:16px;background:#fafafa"></div>
<svg class="a" style="left:309.5px;top:1566.8px" width="7.3" height="9" viewBox="0 0 10 10" preserveAspectRatio="none"><path fill="#888" stroke="#888" stroke-width="2" stroke-linejoin="round" d="M9,1 L9,9 L1.2,5Z"/></svg>
<div class="a" style="left:324px;top:1567px;width:1149px;height:9px;background:#8a8a8a;border-radius:4.5px"></div>
<svg class="a" style="left:1867px;top:1566.8px" width="7.3" height="9" viewBox="0 0 10 10" preserveAspectRatio="none"><path fill="#888" stroke="#888" stroke-width="2" stroke-linejoin="round" d="M1,1 L1,9 L8.8,5Z"/></svg>
<svg class="a" style="left:287.5px;top:881px" width="14" height="12" viewBox="0 0 13.5 12"><path d="M1.5,1.5 L6,6 L1.5,10.5 M7.5,1.5 L12,6 L7.5,10.5" fill="none" stroke="#555" stroke-width="1.9" stroke-linecap="round" stroke-linejoin="round"/></svg>
<div class="a" style="left:280px;top:1599px;width:1636px;height:14px;background:linear-gradient(to bottom, rgba(0,0,0,0), rgba(0,0,0,0.035) 60%, rgba(0,0,0,0.09))"></div>
<div class="a" style="left:280px;top:1612.5px;width:1636px;height:30.5px;background:#dcdde0;border-top:1px solid #c9cbcb"></div>
<svg class="a" style="left:304px;top:1619.5px" width="14" height="15.5" viewBox="0 0 14 16"><path fill="#a9acaf" d="M0,2 C0,0.9 0.9,0 2,0 L13,0 C13.6,0 14,0.4 14,1 L14,11.5 C14,12 13.7,12.3 13.3,12.4 L13.3,14 C13.7,14.1 14,14.5 14,15 C14,15.6 13.6,16 13,16 L2,16 C0.9,16 0,15.1 0,14Z"/><path fill="#f0f0f0" opacity="0.55" d="M2.2,12.6 L12,12.6 L12,14.2 L2.2,14.2Z"/><rect x="4.5" y="3.5" width="6" height="1" fill="#f0f0f0" opacity="0.7"/><rect x="4.5" y="5.5" width="6" height="1" fill="#f0f0f0" opacity="0.7"/></svg>
<div class="a" style="left:324px;top:1621.09px;font-size:12.9px;line-height:14.83px;color:#555;font-weight:normal;white-space:nowrap">Logbook</div>
<svg class="a" style="left:1085px;top:1626px" width="30" height="5" viewBox="0 0 30 5"><rect x="0.0" y="0" width="1.6" height="1.6" fill="#b0b2b4"/><rect x="0.0" y="3" width="1.6" height="1.6" fill="#b0b2b4"/><rect x="3.6" y="0" width="1.6" height="1.6" fill="#b0b2b4"/><rect x="3.6" y="3" width="1.6" height="1.6" fill="#b0b2b4"/><rect x="7.2" y="0" width="1.6" height="1.6" fill="#b0b2b4"/><rect x="7.2" y="3" width="1.6" height="1.6" fill="#b0b2b4"/><rect x="10.8" y="0" width="1.6" height="1.6" fill="#b0b2b4"/><rect x="10.8" y="3" width="1.6" height="1.6" fill="#b0b2b4"/><rect x="14.4" y="0" width="1.6" height="1.6" fill="#b0b2b4"/><rect x="14.4" y="3" width="1.6" height="1.6" fill="#b0b2b4"/><rect x="18.0" y="0" width="1.6" height="1.6" fill="#b0b2b4"/><rect x="18.0" y="3" width="1.6" height="1.6" fill="#b0b2b4"/><rect x="21.6" y="0" width="1.6" height="1.6" fill="#b0b2b4"/><rect x="21.6" y="3" width="1.6" height="1.6" fill="#b0b2b4"/><rect x="25.2" y="0" width="1.6" height="1.6" fill="#b0b2b4"/><rect x="25.2" y="3" width="1.6" height="1.6" fill="#b0b2b4"/></svg>
<svg class="a" style="left:1868px;top:1625px" width="10" height="7" viewBox="0 0 12 8"><path d="M1.2,1.2 L6,6 L10.8,1.2" fill="none" stroke="#555" stroke-width="1.6" stroke-linecap="round" stroke-linejoin="round"/></svg>
<svg class="a" style="left:1888.7px;top:1621.5px" width="8.2" height="12.8" viewBox="0 0 10 14"><path d="M0.5,0.7 L9.5,0.7 M0.5,13.3 L9.5,13.3 M5,2.5 L5,11.5" stroke="#555" stroke-width="1.3"/><path fill="#555" d="M2.6,4.8 L5,2.2 L7.4,4.8Z M2.6,9.2 L5,11.8 L7.4,9.2Z"/></svg>
<div class="a" style="left:280px;top:1643px;width:1636px;height:245px;background:#f2f2f2"></div>
<div class="a" style="left:306px;top:1669px;width:300px;height:194px;background:#fff"></div>
<div class="a" style="left:321px;top:1686px;width:51px;height:30px;background:#23c0c4;border-radius:3px"></div>
<svg class="a" style="left:332px;top:1697px" width="11" height="9" viewBox="0 0 14 11"><path d="M1.5,5.8 L5,9.3 L12.5,1.8" fill="none" stroke="#fff" stroke-width="2" stroke-linecap="round" stroke-linejoin="round"/></svg>
<svg class="a" style="left:356px;top:1700px" width="7" height="4" viewBox="0 0 10 6"><path fill="#fff" d="M0,0 L10,0 L5,6Z"/></svg>
<div class="a" style="left:376px;top:1686px;width:32.5px;height:30px;background:#2169a5;border-radius:3px"></div>
<svg class="a" style="left:386.5px;top:1695px" width="12" height="12" viewBox="0 0 12 12"><path d="M6,1 L6,11 M1,6 L11,6" stroke="#fff" stroke-width="2" stroke-linecap="round"/></svg>
<div class="a" style="left:413px;top:1686px;width:31px;height:30px;background:#1db28f;border-radius:3px"></div>
<svg class="a" style="left:423px;top:1694.5px" width="11" height="13" viewBox="0 0 12 14"><path fill="#fff" stroke="#fff" stroke-width="1.2" stroke-linejoin="round" d="M1.5,1 L11,7 L1.5,13Z"/></svg>
<div class="a" style="left:448.5px;top:1686px;width:33px;height:30px;background:#fff;border:1px solid #e0e0e0;border-radius:3px"></div>
<svg class="a" style="left:458px;top:1694px" width="13" height="13" viewBox="0 0 16 16"><path d="M2.5,7 A5.6,5.6 0 0 1 12.6,4.2" fill="none" stroke="#555" stroke-width="1.8"/><path d="M13.5,9 A5.6,5.6 0 0 1 3.4,11.8" fill="none" stroke="#555" stroke-width="1.8"/><path fill="#555" d="M14.5,1 L14.5,6.5 L9,6.5Z M1.5,15 L1.5,9.5 L7,9.5Z"/></svg>
<div class="a" style="left:486px;top:1686px;width:35px;height:30px;background:#fff;border:1px solid #e0e0e0;border-radius:3px"></div>
<svg class="a" style="left:496.5px;top:1694.5px" width="15" height="13" viewBox="0 0 15 13"><path fill="#555" d="M0,1 Q0,0 1,0 L6.5,0 L10,3.5 L10,5.9 L7.2,5.9 Q6.3,5.9 6.3,6.8 Q6.3,7.7 7.2,7.7 L10,7.7 L10,12 Q10,13 9,13 L1,13 Q0,13 0,12Z"/><path d="M7.5,6.8 L13.3,6.8 M11.2,4.6 L13.6,6.8 L11.2,9" fill="none" stroke="#555" stroke-width="1.4" stroke-linecap="round" stroke-linejoin="round"/></svg>
<div class="a" style="left:525px;top:1686px;width:34px;height:30px;background:#fff;border:1px solid #e0e0e0;border-radius:3px"></div>
<svg class="a" style="left:535px;top:1695px" width="13" height="11" viewBox="0 0 16 14"><rect x="1" y="1" width="14" height="12" rx="1.5" fill="none" stroke="#555" stroke-width="2"/><path d="M1,5.5 L15,5.5 M1,9 L15,9 M8,5.5 L8,13" stroke="#555" stroke-width="1.6"/></svg>
<div class="a" style="left:306px;top:1731px;width:286px;height:1px;background:#e6e6e6"></div>
<div class="a" style="left:321.3px;top:1739.15px;font-size:17.3px;line-height:19.89px;color:#555;font-weight:normal;white-space:nowrap">Filters</div>
<div class="a" style="left:321.3px;top:1768.5px;width:254.5px;height:34px;background:#f2f2f2;border:1px solid #dddddd;border-bottom:none;border-radius:3px 3px 0 0"></div>
<svg class="a" style="left:337px;top:1782.5px" width="12.5" height="8" viewBox="0 0 12 8"><path d="M1.2,1.2 L6,6 L10.8,1.2" fill="none" stroke="#555" stroke-width="1.8" stroke-linecap="round" stroke-linejoin="round"/></svg>
<div class="a" style="left:359px;top:1779.41px;font-size:13.2px;line-height:15.18px;color:#3a3a3a;font-weight:bold;white-space:nowrap">Unread</div>
<div class="a" style="left:321.3px;top:1803.3px;width:254.5px;height:60px;background:#fff;border:1px solid #dddddd"></div>
<div class="a" style="left:322.3px;top:1804.3px;width:252.5px;height:34px;background:#f2f2f2;border-bottom:1px solid #dddddd"></div>
<svg class="a" style="left:337px;top:1817px" width="12.5" height="8" viewBox="0 0 12 8"><path d="M1.2,6.8 L6,2 L10.8,6.8" fill="none" stroke="#555" stroke-width="1.8" stroke-linecap="round" stroke-linejoin="round"/></svg>
<div class="a" style="left:358.5px;top:1814.41px;font-size:13.2px;line-height:15.18px;color:#3a3a3a;font-weight:bold;white-space:nowrap">Action</div>
<div class="a" style="left:538px;top:1814px;width:21.7px;height:15.5px;background:#b3b3b3;border-radius:2px"></div>
<div class="a" style="left:545px;top:1816.54px;font-size:9.5px;line-height:10.92px;color:#555;font-weight:normal;white-space:nowrap">3</div>
<div class="a" style="left:337.3px;top:1858px;width:13px;height:5px;background:#1c74d8;border-radius:2px 2px 0 0"></div>
<div class="a" style="left:356px;top:1860px;width:11px;height:3px;background:#c8c8c8;border-radius:6px 6px 0 0"></div>
<div class="a" style="left:374.5px;top:1861.5px;width:10px;height:1.5px;background:#444"></div>
<div class="a" style="left:306px;top:1863px;width:300px;height:25px;background:#f2f2f2"></div>
<svg class="a" style="left:594px;top:1674.5px" width="9" height="6" viewBox="0 0 10 10" preserveAspectRatio="none"><path fill="#888" stroke="#888" stroke-width="2" stroke-linejoin="round" d="M1,9 L5,1.2 L9,9Z"/></svg>
<div class="a" style="left:594.5px;top:1687.5px;width:8px;height:29px;background:#8a8a8a;border-radius:4px"></div>
<svg class="a" style="left:594px;top:1852.5px" width="9" height="6" viewBox="0 0 10 10" preserveAspectRatio="none"><path fill="#888" stroke="#888" stroke-width="2" stroke-linejoin="round" d="M1,1 L9,1 L5,8.8Z"/></svg>
<svg class="a" style="left:611px;top:1772px" width="14" height="12" viewBox="0 0 13.5 12"><path d="M6,1.5 L1.5,6 L6,10.5 M12,1.5 L7.5,6 L12,10.5" fill="none" stroke="#555" stroke-width="1.9" stroke-linecap="round" stroke-linejoin="round"/></svg>
<div class="a" style="left:631px;top:1669px;width:1263px;height:194px;background:#fff"></div>
<div class="a" style="left:637px;top:1669px;width:1242.5px;height:182px;overflow:hidden">
<div class="a" style="left:17.399999999999977px;top:17.37px;font-size:13.8px;line-height:15.87px;color:#555;font-weight:bold;white-space:nowrap">Last timestamp</div>
<div class="a" style="left:205.29999999999995px;top:17.37px;font-size:13.8px;line-height:15.87px;color:#555;font-weight:bold;white-space:nowrap">Log ID</div>
<div class="a" style="left:318.4px;top:17.37px;font-size:13.8px;line-height:15.87px;color:#555;font-weight:bold;white-space:nowrap">Type</div>
<div class="a" style="left:430.9000000000001px;top:17.37px;font-size:13.8px;line-height:15.87px;color:#555;font-weight:bold;white-space:nowrap">Action</div>
<div class="a" style="left:553.5px;top:17.37px;font-size:13.8px;line-height:15.87px;color:#555;font-weight:bold;white-space:nowrap">Message</div>
<div class="a" style="left:841.3px;top:17.37px;font-size:13.8px;line-height:15.87px;color:#555;font-weight:bold;white-space:nowrap">User</div>
<div class="a" style="left:963.3px;top:17.37px;font-size:13.8px;line-height:15.87px;color:#555;font-weight:bold;white-space:nowrap">Group</div>
<div class="a" style="left:1102px;top:17.37px;font-size:13.8px;line-height:15.87px;color:#555;font-weight:bold;white-space:nowrap">IP Address</div>
<div class="a" style="left:1224.1px;top:17.37px;font-size:13.8px;line-height:15.87px;color:#555;font-weight:bold;white-space:nowrap">Reference</div>
<svg class="a" style="left:176px;top:17.5px" width="12" height="14" viewBox="0 0 12 14"><path d="M3,1 L3,13 M0.8,10.5 L3,13 L5.2,10.5" fill="none" stroke="#d4d4d4" stroke-width="1.6" stroke-linecap="round" stroke-linejoin="round"/><path d="M9,13 L9,1 M6.8,3.5 L9,1 L11.2,3.5" fill="none" stroke="#c8c8c8" stroke-width="1.6" stroke-linecap="round" stroke-linejoin="round"/></svg>
<div class="a" style="left:730px;top:19.5px;width:10px;height:10px;background:#1c74d8;border-radius:2px"></div>
<svg class="a" style="left:731.3px;top:21.299999999999955px" width="7.4" height="6.4" viewBox="0 0 14 11"><path d="M1.5,5.8 L5,9.3 L12.5,1.8" fill="none" stroke="#fff" stroke-width="2.6" stroke-linecap="round" stroke-linejoin="round"/></svg>
<div class="a" style="left:746.3px;top:20.99px;font-size:9.4px;line-height:10.81px;color:#555;font-weight:bold;white-space:nowrap">Show details</div>
<div class="a" style="left:9px;top:48.5px;width:1260px;height:2px;background:#dfe3e7"></div>
<div class="a" style="left:17.399999999999977px;top:64.31px;font-size:13.2px;line-height:15.18px;color:#555;font-weight:normal;white-space:nowrap">2025-09-15 08:11:25.4227</div>
<div class="a" style="left:205.29999999999995px;top:64.31px;font-size:13.2px;line-height:15.18px;color:#555;font-weight:normal;white-space:nowrap">45352408</div>
<div class="a" style="left:318px;top:63px;width:49.6px;height:15.5px;background:#22c3c3;border-radius:2px"></div>
<div class="a" style="left:322.5px;top:65.79999999999995px;width:10px;height:10px;background:#fff;border-radius:50%"></div>
<div class="a" style="left:326.79999999999995px;top:69.5px;width:1.5px;height:4.5px;background:#22c3c3"></div>
<div class="a" style="left:326.79999999999995px;top:67.29999999999995px;width:1.5px;height:1.4px;background:#22c3c3"></div>
<div class="a" style="left:341.4px;top:66.24px;font-size:10.2px;line-height:11.73px;color:#fff;font-weight:bold;white-space:nowrap">Info</div>
<div class="a" style="left:432.5px;top:64.5px;width:13px;height:13px;background:#b0b0b0;border-radius:50%"></div>
<div class="a" style="left:438.29999999999995px;top:66.5px;width:1.5px;height:5.5px;background:#eee"></div>
<div class="a" style="left:438.29999999999995px;top:71px;width:4px;height:1.5px;background:#eee"></div>
<div class="a" style="left:451.20000000000005px;top:64.08px;font-size:13.6px;line-height:15.64px;color:#555;font-weight:normal;white-space:nowrap">Event</div>
<div class="a" style="left:553.5px;top:64.14px;font-size:13.5px;line-height:15.52px;color:#555;font-weight:normal;white-space:nowrap">User 'admin' successfully logged in using</div>
<div class="a" style="left:553.5px;top:82.54px;font-size:13.5px;line-height:15.52px;color:#555;font-weight:normal;white-space:nowrap">username, password and pincode.</div>
<svg class="a" style="left:843px;top:63.5px" width="12" height="14" viewBox="0 0 16 16"><circle cx="8" cy="4.2" r="3.8" fill="#888"/><path fill="#666" d="M1,16 C1,11 3.5,9.3 8,9.3 C12.5,9.3 15,11 15,16Z"/></svg>
<div class="a" style="left:861.4000000000001px;top:63.80px;font-size:14.1px;line-height:16.21px;color:#1f5c99;font-weight:normal;white-space:nowrap">Administrator</div>
<div class="a" style="left:963.3px;top:64.08px;font-size:13.6px;line-height:15.64px;color:#555;font-weight:normal;white-space:nowrap">Auth</div>
<div class="a" style="left:1102px;top:64.31px;font-size:13.2px;line-height:15.18px;color:#555;font-weight:normal;white-space:nowrap">192.168.200.152</div>
<div class="a" style="left:1224.1px;top:64.66px;font-size:12.6px;line-height:14.49px;color:#555;font-weight:normal;white-space:nowrap;letter-spacing:-0.9px">C6J</div>
<div class="a" style="left:1224.1px;top:82.61px;font-size:13.2px;line-height:15.18px;color:#555;font-weight:normal;white-space:nowrap">H</div>
<div class="a" style="left:9px;top:108.5px;width:1260px;height:1px;background:transparent;border-top:1px dashed #dde2e6"></div>
<div class="a" style="left:9px;top:109.5px;width:1260px;height:69px;background:#fcf6e5"></div>
<div class="a" style="left:17.399999999999977px;top:124.01px;font-size:13.2px;line-height:15.18px;color:#555;font-weight:normal;white-space:nowrap">2025-09-15 08:11:12.0182</div>
<div class="a" style="left:205.29999999999995px;top:124.01px;font-size:13.2px;line-height:15.18px;color:#555;font-weight:normal;white-space:nowrap">45352405</div>
<div class="a" style="left:318px;top:122px;width:71.6px;height:15.6px;background:#f5a54a;border-radius:2px"></div>
<svg class="a" style="left:322px;top:124.5px" width="13" height="11" viewBox="0 0 13 11"><path fill="#fff" d="M6.5,0.3 L12.8,10.7 L0.2,10.7Z"/><rect x="5.9" y="3.6" width="1.3" height="4" fill="#f5a54a"/><rect x="5.9" y="8.4" width="1.3" height="1.3" fill="#f5a54a"/></svg>
<div class="a" style="left:340.70000000000005px;top:125.12px;font-size:10.4px;line-height:11.96px;color:#fff;font-weight:bold;white-space:nowrap">Warning</div>
<svg class="a" style="left:432.5px;top:123px" width="14" height="13" viewBox="0 0 14 13"><ellipse cx="7" cy="5.8" rx="6.8" ry="5.3" fill="#b0b0b0"/><path fill="#b0b0b0" d="M1.5,9 L0.5,12.5 L5,10.5Z"/><circle cx="4" cy="6" r="0.9" fill="#eee"/><circle cx="7" cy="6" r="0.9" fill="#eee"/><circle cx="10" cy="6" r="0.9" fill="#eee"/></svg>
<div class="a" style="left:451.20000000000005px;top:123.78px;font-size:13.6px;line-height:15.64px;color:#555;font-weight:normal;white-space:nowrap">Message</div>
<div class="a" style="left:553.5px;top:123.73px;font-size:13.7px;line-height:15.75px;color:#555;font-weight:normal;white-space:nowrap">Invalid userame/password provided.</div>
<svg class="a" style="left:843.5px;top:123px" width="11" height="14" viewBox="0 0 16 16"><path fill="#555" d="M4,0 L5.8,0 L5.8,4 L10.2,4 L10.2,0 L12,0 L12,4 L14,4 L14,6 L13,6 L13,8.5 C13,11 11,12.8 9,13 L9,16 L7,16 L7,13 C5,12.8 3,11 3,8.5 L3,6 L2,6 L2,4 L4,4Z"/></svg>
<div class="a" style="left:861.4000000000001px;top:123.78px;font-size:13.6px;line-height:15.64px;color:#1f5c99;font-weight:normal;white-space:nowrap">Windows NT</div>
<div class="a" style="left:841.3px;top:142.78px;font-size:13.6px;line-height:15.64px;color:#1f5c99;font-weight:normal;white-space:nowrap">10.0; Win64; x64;</div>
<div class="a" style="left:841.3px;top:160.78px;font-size:13.6px;line-height:15.64px;color:#1f5c99;font-weight:normal;white-space:nowrap">rv:141.0</div>
<div class="a" style="left:963.3px;top:123.78px;font-size:13.6px;line-height:15.64px;color:#555;font-weight:normal;white-space:nowrap">Monitor</div>
<div class="a" style="left:1102px;top:124.01px;font-size:13.2px;line-height:15.18px;color:#555;font-weight:normal;white-space:nowrap">192.168.200.152</div>
<div class="a" style="left:1224.1px;top:124.36px;font-size:12.6px;line-height:14.49px;color:#555;font-weight:normal;white-space:nowrap;letter-spacing:-0.9px">C5J</div>
<div class="a" style="left:1224.1px;top:142.81px;font-size:13.2px;line-height:15.18px;color:#555;font-weight:normal;white-space:nowrap">G</div>
</div>
<div class="a" style="left:637px;top:1847.5px;width:1242.5px;height:15.5px;background:#fafafa"></div>
<svg class="a" style="left:635.5px;top:1851.5px" width="7" height="8.5" viewBox="0 0 10 10" preserveAspectRatio="none"><path fill="#888" stroke="#888" stroke-width="2" stroke-linejoin="round" d="M9,1 L9,9 L1.2,5Z"/></svg>
<div class="a" style="left:649px;top:1851.5px;width:954.5px;height:8.5px;background:#8a8a8a;border-radius:4.5px"></div>
<svg class="a" style="left:1867.5px;top:1851.5px" width="7" height="8.5" viewBox="0 0 10 10" preserveAspectRatio="none"><path fill="#888" stroke="#888" stroke-width="2" stroke-linejoin="round" d="M1,1 L1,9 L8.8,5Z"/></svg>
<svg class="a" style="left:1882px;top:1674.5px" width="9" height="6" viewBox="0 0 10 10" preserveAspectRatio="none"><path fill="#888" stroke="#888" stroke-width="2" stroke-linejoin="round" d="M1,9 L5,1.2 L9,9Z"/></svg>
<div class="a" style="left:1882.5px;top:1688px;width:8.5px;height:15.5px;background:#8a8a8a;border-radius:4px"></div>
<svg class="a" style="left:1882px;top:1837.5px" width="9" height="6" viewBox="0 0 10 10" preserveAspectRatio="none"><path fill="#888" stroke="#888" stroke-width="2" stroke-linejoin="round" d="M1,1 L9,1 L5,8.8Z"/></svg>
<div class="a" style="left:280px;top:1888px;width:1636px;height:30.5px;background:#dcdde0;border-top:1px solid #c5c8c5"></div>
<svg class="a" style="left:303.5px;top:1895.5px" width="14" height="16" viewBox="0 0 16 18"><path fill="#8e9398" d="M8,0.5 C8.6,0.5 9,0.9 9,1.5 L9,2.2 C11.6,2.7 13.3,5 13.3,7.6 L13.3,9.8 C13.3,11.3 14,12.6 15.2,13.5 C15.6,13.8 15.4,14.5 14.9,14.5 L1.1,14.5 C0.6,14.5 0.4,13.8 0.8,13.5 C2,12.6 2.7,11.3 2.7,9.8 L2.7,7.6 C2.7,5 4.4,2.7 7,2.2 L7,1.5 C7,0.9 7.4,0.5 8,0.5Z"/><path fill="#8e9398" d="M5.8,15.5 L10.2,15.5 C10.2,16.7 9.2,17.6 8,17.6 C6.8,17.6 5.8,16.7 5.8,15.5Z"/></svg>
<div class="a" style="left:324.3px;top:1895.84px;font-size:13.5px;line-height:15.52px;color:#555;font-weight:normal;white-space:nowrap">Notifications</div>
<svg class="a" style="left:1085px;top:1901px" width="30" height="5" viewBox="0 0 30 5"><rect x="0.0" y="0" width="1.6" height="1.6" fill="#b0b2b4"/><rect x="0.0" y="3" width="1.6" height="1.6" fill="#b0b2b4"/><rect x="3.6" y="0" width="1.6" height="1.6" fill="#b0b2b4"/><rect x="3.6" y="3" width="1.6" height="1.6" fill="#b0b2b4"/><rect x="7.2" y="0" width="1.6" height="1.6" fill="#b0b2b4"/><rect x="7.2" y="3" width="1.6" height="1.6" fill="#b0b2b4"/><rect x="10.8" y="0" width="1.6" height="1.6" fill="#b0b2b4"/><rect x="10.8" y="3" width="1.6" height="1.6" fill="#b0b2b4"/><rect x="14.4" y="0" width="1.6" height="1.6" fill="#b0b2b4"/><rect x="14.4" y="3" width="1.6" height="1.6" fill="#b0b2b4"/><rect x="18.0" y="0" width="1.6" height="1.6" fill="#b0b2b4"/><rect x="18.0" y="3" width="1.6" height="1.6" fill="#b0b2b4"/><rect x="21.6" y="0" width="1.6" height="1.6" fill="#b0b2b4"/><rect x="21.6" y="3" width="1.6" height="1.6" fill="#b0b2b4"/><rect x="25.2" y="0" width="1.6" height="1.6" fill="#b0b2b4"/><rect x="25.2" y="3" width="1.6" height="1.6" fill="#b0b2b4"/></svg>
<svg class="a" style="left:1867.5px;top:1898.5px" width="10" height="7" viewBox="0 0 12 8"><path d="M1.2,6.8 L6,2 L10.8,6.8" fill="none" stroke="#555" stroke-width="1.6" stroke-linecap="round" stroke-linejoin="round"/></svg>
<svg class="a" style="left:1888.7px;top:1896.5px" width="8.2" height="12.8" viewBox="0 0 10 14"><path d="M0.5,0.7 L9.5,0.7 M0.5,13.3 L9.5,13.3 M5,2.5 L5,11.5" stroke="#555" stroke-width="1.3"/><path fill="#555" d="M2.6,4.8 L5,2.2 L7.4,4.8Z M2.6,9.2 L5,11.8 L7.4,9.2Z"/></svg>
<div class="a" style="left:280px;top:1918px;width:1636px;height:30.5px;background:#dcdde0;border-top:1px solid #c5c8c5"></div>
<svg class="a" style="left:303px;top:1926px" width="15" height="15" viewBox="0 0 16 16"><path d="M3.2,5 A6.2,6.2 0 1 1 2.6,10.2" fill="none" stroke="#8e9398" stroke-width="1.8"/><path fill="#8e9398" d="M0.5,1.5 L0.5,6.8 L5.8,6.8Z"/><path d="M9,4.5 L9,8.5 L11.5,10.5" fill="none" stroke="#8e9398" stroke-width="1.8" stroke-linecap="round"/></svg>
<div class="a" style="left:324.3px;top:1926.27px;font-size:13.1px;line-height:15.06px;color:#555;font-weight:normal;white-space:nowrap">Value History</div>
<svg class="a" style="left:1085px;top:1931px" width="30" height="5" viewBox="0 0 30 5"><rect x="0.0" y="0" width="1.6" height="1.6" fill="#b0b2b4"/><rect x="0.0" y="3" width="1.6" height="1.6" fill="#b0b2b4"/><rect x="3.6" y="0" width="1.6" height="1.6" fill="#b0b2b4"/><rect x="3.6" y="3" width="1.6" height="1.6" fill="#b0b2b4"/><rect x="7.2" y="0" width="1.6" height="1.6" fill="#b0b2b4"/><rect x="7.2" y="3" width="1.6" height="1.6" fill="#b0b2b4"/><rect x="10.8" y="0" width="1.6" height="1.6" fill="#b0b2b4"/><rect x="10.8" y="3" width="1.6" height="1.6" fill="#b0b2b4"/><rect x="14.4" y="0" width="1.6" height="1.6" fill="#b0b2b4"/><rect x="14.4" y="3" width="1.6" height="1.6" fill="#b0b2b4"/><rect x="18.0" y="0" width="1.6" height="1.6" fill="#b0b2b4"/><rect x="18.0" y="3" width="1.6" height="1.6" fill="#b0b2b4"/><rect x="21.6" y="0" width="1.6" height="1.6" fill="#b0b2b4"/><rect x="21.6" y="3" width="1.6" height="1.6" fill="#b0b2b4"/><rect x="25.2" y="0" width="1.6" height="1.6" fill="#b0b2b4"/><rect x="25.2" y="3" width="1.6" height="1.6" fill="#b0b2b4"/></svg>
<svg class="a" style="left:1867.5px;top:1928.5px" width="10" height="7" viewBox="0 0 12 8"><path d="M1.2,6.8 L6,2 L10.8,6.8" fill="none" stroke="#555" stroke-width="1.6" stroke-linecap="round" stroke-linejoin="round"/></svg>
<svg class="a" style="left:1888.7px;top:1926.5px" width="8.2" height="12.8" viewBox="0 0 10 14"><path d="M0.5,0.7 L9.5,0.7 M0.5,13.3 L9.5,13.3 M5,2.5 L5,11.5" stroke="#555" stroke-width="1.3"/><path fill="#555" d="M2.6,4.8 L5,2.2 L7.4,4.8Z M2.6,9.2 L5,11.8 L7.4,9.2Z"/></svg>
<div class="a" style="left:280px;top:1948.5px;width:1636px;height:37.5px;background:#fff"></div>
<div class="a" style="left:301.3px;top:1960.56px;font-size:13.3px;line-height:15.29px;color:#555;font-weight:normal;white-space:nowrap">Powered by <b style="color:#444">CoCoS</b> <span style="font-size:10px">v5.1.0-rc.1</span>, grown by <b style="color:#444">(concera</b> &copy; 2025</div>
<div class="a" style="left:642px;top:1949px;width:131px;height:37px;background:#fef5eb"></div>
<svg class="a" style="left:658.5px;top:1962.5px" width="12.5" height="11" viewBox="0 0 13 11"><path fill="#fbd9b5" d="M6.5,0.3 L12.8,10.7 L0.2,10.7Z"/></svg>
<div class="a" style="left:676.7px;top:1960.56px;font-size:13.3px;line-height:15.29px;color:#fbd9b5;font-weight:bold;white-space:nowrap">Service mode</div>
<div class="a" style="left:1706.8px;top:1960.38px;font-size:13.6px;line-height:15.64px;color:#555;font-weight:normal;white-space:nowrap">Load completed</div>
<div class="a" style="left:1814px;top:1949px;width:1px;height:37px;background:#e6e6e6"></div>
<svg class="a" style="left:1823.5px;top:1961px" width="18" height="14" viewBox="0 0 18 14"><path d="M1.5,7 C4,2.5 14,2.5 16.5,7 C14,11.5 4,11.5 1.5,7Z" fill="none" stroke="#c5c5c5" stroke-width="2"/><circle cx="9" cy="7" r="2.2" fill="#c5c5c5"/><path d="M2,0.8 L16,13.2" stroke="#777" stroke-width="1.6"/></svg>
<svg class="a" style="left:1855px;top:1960px" width="12" height="16" viewBox="0 0 12 16"><path d="M0.5,8 L11.5,8" stroke="#555" stroke-width="1.4"/><path d="M6,0.5 L6,6 M6,10 L6,15.5" stroke="#555" stroke-width="1.4"/><path fill="#555" d="M3,3.5 L6,6.5 L9,3.5Z M3,12.5 L6,9.5 L9,12.5Z"/></svg>
<svg class="a" style="left:1882px;top:1961px" width="16" height="14" viewBox="0 0 16 14"><path d="M4,0.5 L4,9 M12,0.5 L12,9" stroke="#555" stroke-width="1.6"/><path fill="#555" d="M0.8,6 L4,10 L7.2,6Z M8.8,6 L12,10 L15.2,6Z"/><path d="M0.5,13 L15.5,13" stroke="#c8c8c8" stroke-width="1.4"/></svg></body></html>
